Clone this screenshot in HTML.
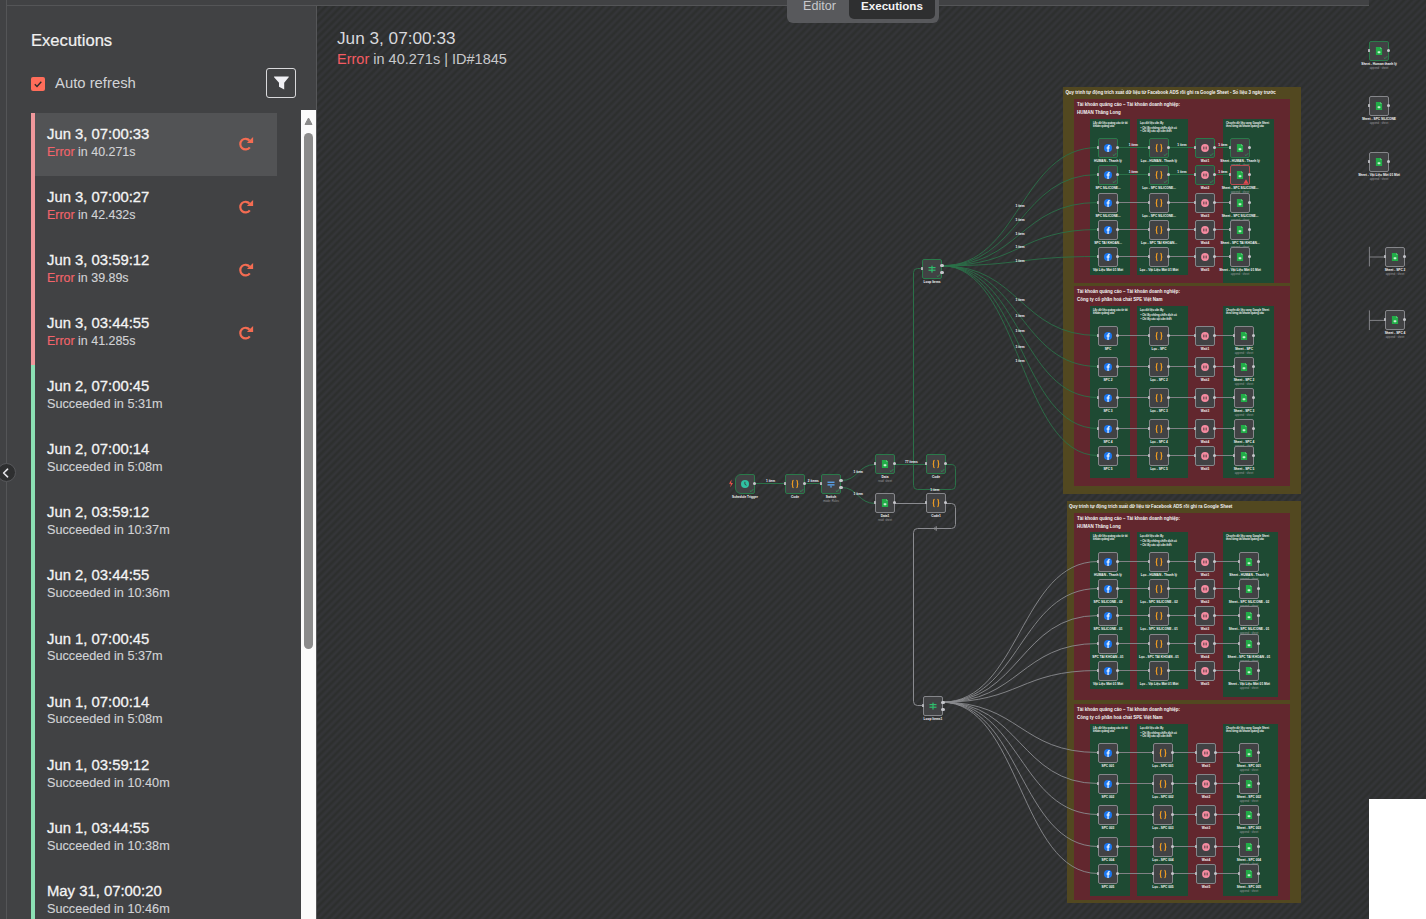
<!DOCTYPE html><html><head><meta charset='utf-8'><style>
*{box-sizing:border-box;margin:0;padding:0}
html,body{width:1426px;height:919px;overflow:hidden;background:#2d2f2e;font-family:"Liberation Sans",sans-serif}
.abs{position:absolute}
#canvas{position:absolute;left:317px;top:0;width:1109px;height:919px;
 background:repeating-linear-gradient(135deg,#2d2f2e 0px,#2d2f2e 0.8px,#343538 2.65px,#343538 3.45px,#2d2f2e 5.3px)}
#topbar{position:absolute;left:7px;top:0;width:1362px;height:6px;background:#414244;border-bottom:1px solid #545557}
#leftstrip{position:absolute;left:0;top:0;width:7px;height:919px;background:#414244;border-right:1px solid #545557}
#sidebar{position:absolute;left:7px;top:6px;width:310px;height:913px;background:#414244;border-right:1px solid #555658}
.t{position:absolute;white-space:nowrap;line-height:1}
.row{position:absolute;left:31px;width:246px;height:63px}
.bar{position:absolute;left:0;top:0;width:4px;height:63px}
.date{position:absolute;left:16px;top:13.8px;font-size:14.85px;font-weight:400;-webkit-text-stroke:0.28px #f4f4f4;color:#f4f4f4;white-space:nowrap;line-height:1}
.sub{position:absolute;left:16px;top:32.6px;font-size:12.45px;color:#d2d3d6;-webkit-text-stroke:0.12px currentColor;white-space:nowrap;line-height:1}
.err{color:#f2646b}
.node{position:absolute;width:20px;height:20px;border:1px solid #8a8b8e;border-radius:2px;background:#414244}
.node.g{border-color:#2f9a5a}
.node.r{border-color:#d9535b}
.lbl{position:absolute;white-space:nowrap;color:#e8e8e8;font-weight:700;transform-origin:50% 0}
</style></head><body>
<div id='canvas'></div>
<div id='leftstrip'></div>
<div id='sidebar'></div>
<div id='topbar'></div>
<div class='abs' style='left:1063px;top:87px;width:238px;height:406.5px;background:#524820'></div>
<div class='abs' style='left:1066.8px;top:501.2px;width:234.20000000000005px;height:402.09999999999997px;background:#524820'></div>
<div class='abs' style='left:1074.1px;top:99.4px;width:215.5px;height:183.6px;background:#62272e'></div>
<div class='abs' style='left:1074.1px;top:286.4px;width:215.5px;height:199.3px;background:#62272e'></div>
<div class='abs' style='left:1074.1px;top:513.2px;width:215.5px;height:187.0px;background:#62272e'></div>
<div class='abs' style='left:1074.1px;top:704.1px;width:215.5px;height:195.60000000000002px;background:#62272e'></div>
<div class='abs' style='left:1090.3px;top:118.8px;width:39.299999999999955px;height:155.89999999999998px;background:#1e4a33'></div>
<div class='abs' style='left:1137.3px;top:118.8px;width:50.700000000000045px;height:155.89999999999998px;background:#1e4a33'></div>
<div class='abs' style='left:1223px;top:118.8px;width:51px;height:163.8px;background:#1e4a33'></div>
<div class='abs' style='left:1090.3px;top:306px;width:39.299999999999955px;height:171.7px;background:#1e4a33'></div>
<div class='abs' style='left:1137.3px;top:306px;width:50.700000000000045px;height:171.7px;background:#1e4a33'></div>
<div class='abs' style='left:1223px;top:306px;width:51px;height:171.7px;background:#1e4a33'></div>
<div class='abs' style='left:1090.3px;top:532.2px;width:39.299999999999955px;height:156.5999999999999px;background:#1e4a33'></div>
<div class='abs' style='left:1137.3px;top:532.2px;width:50.700000000000045px;height:156.5999999999999px;background:#1e4a33'></div>
<div class='abs' style='left:1223px;top:532.2px;width:54.799999999999955px;height:164.39999999999998px;background:#1e4a33'></div>
<div class='abs' style='left:1090.3px;top:723.8px;width:39.299999999999955px;height:171.80000000000007px;background:#1e4a33'></div>
<div class='abs' style='left:1137.3px;top:723.8px;width:50.700000000000045px;height:171.80000000000007px;background:#1e4a33'></div>
<div class='abs' style='left:1223px;top:723.8px;width:54.799999999999955px;height:171.80000000000007px;background:#1e4a33'></div>
<div class='t' style='left:1065.4px;top:91.1px;font-size:4.44px;color:#f4f4f4;font-weight:700'>Quy trình tự động trích xuất dữ liệu từ Facebook ADS rồi ghi ra Google Sheet - Số liệu 3 ngày trước</div>
<div class='t' style='left:1069px;top:505.2px;font-size:4.44px;color:#f4f4f4;font-weight:700'>Quy trình tự động trích xuất dữ liệu từ Facebook ADS rồi ghi ra Google Sheet</div>
<div class='t' style='left:1076.8999999999999px;top:103.0px;font-size:4.5px;color:#f4f4f4;font-weight:700'>Tài khoản quảng cáo – Tài khoản doanh nghiệp:</div>
<div class='t' style='left:1076.8999999999999px;top:111.0px;font-size:4.5px;color:#f4f4f4;font-weight:700'>HUMAN Thăng Long</div>
<div class='t' style='left:1076.8999999999999px;top:290.0px;font-size:4.5px;color:#f4f4f4;font-weight:700'>Tài khoản quảng cáo – Tài khoản doanh nghiệp:</div>
<div class='t' style='left:1076.8999999999999px;top:298.0px;font-size:4.5px;color:#f4f4f4;font-weight:700'>Công ty cổ phần hoá chất SPE Việt Nam</div>
<div class='t' style='left:1076.8999999999999px;top:516.8000000000001px;font-size:4.5px;color:#f4f4f4;font-weight:700'>Tài khoản quảng cáo – Tài khoản doanh nghiệp:</div>
<div class='t' style='left:1076.8999999999999px;top:524.8000000000001px;font-size:4.5px;color:#f4f4f4;font-weight:700'>HUMAN Thăng Long</div>
<div class='t' style='left:1076.8999999999999px;top:707.7px;font-size:4.5px;color:#f4f4f4;font-weight:700'>Tài khoản quảng cáo – Tài khoản doanh nghiệp:</div>
<div class='t' style='left:1076.8999999999999px;top:715.7px;font-size:4.5px;color:#f4f4f4;font-weight:700'>Công ty cổ phần hoá chất SPE Việt Nam</div>
<div class='t' style='left:1093px;top:122.7px;font-size:2.6px;color:#f4f4f4;font-weight:700'>Lấy dữ liệu quảng cáo từ tài</div>
<div class='t' style='left:1093px;top:126.0px;font-size:2.6px;color:#f4f4f4;font-weight:700'>khoản quảng cáo</div>
<div class='t' style='left:1140px;top:122.7px;font-size:2.6px;color:#f4f4f4;font-weight:700'>Lọc dữ liệu cần lấy</div>
<div class='t' style='left:1140.5px;top:127.5px;font-size:2.6px;color:#f4f4f4;font-weight:700'>• Chỉ lấy những chiến dịch có</div>
<div class='t' style='left:1140.5px;top:131.4px;font-size:2.6px;color:#f4f4f4;font-weight:700'>• Chỉ lấy các cột cần thiết</div>
<div class='t' style='left:1226px;top:122.7px;font-size:2.6px;color:#f4f4f4;font-weight:700'>Chuyển dữ liệu sang Google Sheet</div>
<div class='t' style='left:1226px;top:126.0px;font-size:2.6px;color:#f4f4f4;font-weight:700'>theo từng tài khoản quảng cáo</div>
<div class='t' style='left:1093px;top:309.9px;font-size:2.6px;color:#f4f4f4;font-weight:700'>Lấy dữ liệu quảng cáo từ tài</div>
<div class='t' style='left:1093px;top:313.2px;font-size:2.6px;color:#f4f4f4;font-weight:700'>khoản quảng cáo</div>
<div class='t' style='left:1140px;top:309.9px;font-size:2.6px;color:#f4f4f4;font-weight:700'>Lọc dữ liệu cần lấy</div>
<div class='t' style='left:1140.5px;top:314.7px;font-size:2.6px;color:#f4f4f4;font-weight:700'>• Chỉ lấy những chiến dịch có</div>
<div class='t' style='left:1140.5px;top:318.6px;font-size:2.6px;color:#f4f4f4;font-weight:700'>• Chỉ lấy các cột cần thiết</div>
<div class='t' style='left:1226px;top:309.9px;font-size:2.6px;color:#f4f4f4;font-weight:700'>Chuyển dữ liệu sang Google Sheet</div>
<div class='t' style='left:1226px;top:313.2px;font-size:2.6px;color:#f4f4f4;font-weight:700'>theo từng tài khoản quảng cáo</div>
<div class='t' style='left:1093px;top:536.1px;font-size:2.6px;color:#f4f4f4;font-weight:700'>Lấy dữ liệu quảng cáo từ tài</div>
<div class='t' style='left:1093px;top:539.4000000000001px;font-size:2.6px;color:#f4f4f4;font-weight:700'>khoản quảng cáo</div>
<div class='t' style='left:1140px;top:536.1px;font-size:2.6px;color:#f4f4f4;font-weight:700'>Lọc dữ liệu cần lấy</div>
<div class='t' style='left:1140.5px;top:540.9000000000001px;font-size:2.6px;color:#f4f4f4;font-weight:700'>• Chỉ lấy những chiến dịch có</div>
<div class='t' style='left:1140.5px;top:544.8000000000001px;font-size:2.6px;color:#f4f4f4;font-weight:700'>• Chỉ lấy các cột cần thiết</div>
<div class='t' style='left:1226px;top:536.1px;font-size:2.6px;color:#f4f4f4;font-weight:700'>Chuyển dữ liệu sang Google Sheet</div>
<div class='t' style='left:1226px;top:539.4000000000001px;font-size:2.6px;color:#f4f4f4;font-weight:700'>theo từng tài khoản quảng cáo</div>
<div class='t' style='left:1093px;top:727.6999999999999px;font-size:2.6px;color:#f4f4f4;font-weight:700'>Lấy dữ liệu quảng cáo từ tài</div>
<div class='t' style='left:1093px;top:731.0px;font-size:2.6px;color:#f4f4f4;font-weight:700'>khoản quảng cáo</div>
<div class='t' style='left:1140px;top:727.6999999999999px;font-size:2.6px;color:#f4f4f4;font-weight:700'>Lọc dữ liệu cần lấy</div>
<div class='t' style='left:1140.5px;top:732.5px;font-size:2.6px;color:#f4f4f4;font-weight:700'>• Chỉ lấy những chiến dịch có</div>
<div class='t' style='left:1140.5px;top:736.4px;font-size:2.6px;color:#f4f4f4;font-weight:700'>• Chỉ lấy các cột cần thiết</div>
<div class='t' style='left:1226px;top:727.6999999999999px;font-size:2.6px;color:#f4f4f4;font-weight:700'>Chuyển dữ liệu sang Google Sheet</div>
<div class='t' style='left:1226px;top:731.0px;font-size:2.6px;color:#f4f4f4;font-weight:700'>theo từng tài khoản quảng cáo</div>
<svg class='abs' style='left:0;top:0' width='1426' height='919'><path d='M1118 147.5 L1149 147.5' fill='none' stroke='#2a7148' stroke-width='1'/><path d='M1169 147.5 L1195 147.5' fill='none' stroke='#2a7148' stroke-width='1'/><path d='M1215 147.5 L1230 147.5' fill='none' stroke='#2a7148' stroke-width='1'/><path d='M1118 174.5 L1149 174.5' fill='none' stroke='#2a7148' stroke-width='1'/><path d='M1169 174.5 L1195 174.5' fill='none' stroke='#2a7148' stroke-width='1'/><path d='M1215 174.5 L1230 174.5' fill='none' stroke='#2a7148' stroke-width='1'/><path d='M1118 202.5 L1149 202.5' fill='none' stroke='#808185' stroke-width='1'/><path d='M1169 202.5 L1195 202.5' fill='none' stroke='#808185' stroke-width='1'/><path d='M1215 202.5 L1230 202.5' fill='none' stroke='#808185' stroke-width='1'/><path d='M1118 229.5 L1149 229.5' fill='none' stroke='#808185' stroke-width='1'/><path d='M1169 229.5 L1195 229.5' fill='none' stroke='#808185' stroke-width='1'/><path d='M1215 229.5 L1230 229.5' fill='none' stroke='#808185' stroke-width='1'/><path d='M1118 256.5 L1149 256.5' fill='none' stroke='#808185' stroke-width='1'/><path d='M1169 256.5 L1195 256.5' fill='none' stroke='#808185' stroke-width='1'/><path d='M1215 256.5 L1230 256.5' fill='none' stroke='#808185' stroke-width='1'/><path d='M1118 335.5 L1149 335.5' fill='none' stroke='#808185' stroke-width='1'/><path d='M1169 335.5 L1195 335.5' fill='none' stroke='#808185' stroke-width='1'/><path d='M1215 335.5 L1234 335.5' fill='none' stroke='#808185' stroke-width='1'/><path d='M1118 366.5 L1149 366.5' fill='none' stroke='#808185' stroke-width='1'/><path d='M1169 366.5 L1195 366.5' fill='none' stroke='#808185' stroke-width='1'/><path d='M1215 366.5 L1234 366.5' fill='none' stroke='#808185' stroke-width='1'/><path d='M1118 397.5 L1149 397.5' fill='none' stroke='#808185' stroke-width='1'/><path d='M1169 397.5 L1195 397.5' fill='none' stroke='#808185' stroke-width='1'/><path d='M1215 397.5 L1234 397.5' fill='none' stroke='#808185' stroke-width='1'/><path d='M1118 428.5 L1149 428.5' fill='none' stroke='#808185' stroke-width='1'/><path d='M1169 428.5 L1195 428.5' fill='none' stroke='#808185' stroke-width='1'/><path d='M1215 428.5 L1234 428.5' fill='none' stroke='#808185' stroke-width='1'/><path d='M1118 455.5 L1149 455.5' fill='none' stroke='#808185' stroke-width='1'/><path d='M1169 455.5 L1195 455.5' fill='none' stroke='#808185' stroke-width='1'/><path d='M1215 455.5 L1234 455.5' fill='none' stroke='#808185' stroke-width='1'/><path d='M1118 561.5 L1149 561.5' fill='none' stroke='#808185' stroke-width='1'/><path d='M1169 561.5 L1195 561.5' fill='none' stroke='#808185' stroke-width='1'/><path d='M1215 561.5 L1239 561.5' fill='none' stroke='#808185' stroke-width='1'/><path d='M1118 588.5 L1149 588.5' fill='none' stroke='#808185' stroke-width='1'/><path d='M1169 588.5 L1195 588.5' fill='none' stroke='#808185' stroke-width='1'/><path d='M1215 588.5 L1239 588.5' fill='none' stroke='#808185' stroke-width='1'/><path d='M1118 615.5 L1149 615.5' fill='none' stroke='#808185' stroke-width='1'/><path d='M1169 615.5 L1195 615.5' fill='none' stroke='#808185' stroke-width='1'/><path d='M1215 615.5 L1239 615.5' fill='none' stroke='#808185' stroke-width='1'/><path d='M1118 643.5 L1149 643.5' fill='none' stroke='#808185' stroke-width='1'/><path d='M1169 643.5 L1195 643.5' fill='none' stroke='#808185' stroke-width='1'/><path d='M1215 643.5 L1239 643.5' fill='none' stroke='#808185' stroke-width='1'/><path d='M1118 670.5 L1149 670.5' fill='none' stroke='#808185' stroke-width='1'/><path d='M1169 670.5 L1195 670.5' fill='none' stroke='#808185' stroke-width='1'/><path d='M1215 670.5 L1239 670.5' fill='none' stroke='#808185' stroke-width='1'/><path d='M1118 752.5 L1153 752.5' fill='none' stroke='#808185' stroke-width='1'/><path d='M1173 752.5 L1196 752.5' fill='none' stroke='#808185' stroke-width='1'/><path d='M1216 752.5 L1239 752.5' fill='none' stroke='#808185' stroke-width='1'/><path d='M1118 783.5 L1153 783.5' fill='none' stroke='#808185' stroke-width='1'/><path d='M1173 783.5 L1196 783.5' fill='none' stroke='#808185' stroke-width='1'/><path d='M1216 783.5 L1239 783.5' fill='none' stroke='#808185' stroke-width='1'/><path d='M1118 814.5 L1153 814.5' fill='none' stroke='#808185' stroke-width='1'/><path d='M1173 814.5 L1196 814.5' fill='none' stroke='#808185' stroke-width='1'/><path d='M1216 814.5 L1239 814.5' fill='none' stroke='#808185' stroke-width='1'/><path d='M1118 846.5 L1153 846.5' fill='none' stroke='#808185' stroke-width='1'/><path d='M1173 846.5 L1196 846.5' fill='none' stroke='#808185' stroke-width='1'/><path d='M1216 846.5 L1239 846.5' fill='none' stroke='#808185' stroke-width='1'/><path d='M1118 873.5 L1153 873.5' fill='none' stroke='#808185' stroke-width='1'/><path d='M1173 873.5 L1196 873.5' fill='none' stroke='#808185' stroke-width='1'/><path d='M1216 873.5 L1239 873.5' fill='none' stroke='#808185' stroke-width='1'/><path d='M755 483.5 L785.4 483.5' fill='none' stroke='#2a7148' stroke-width='1'/><path d='M805.4 483.5 L820.8 483.5' fill='none' stroke='#2a7148' stroke-width='1'/><path d='M841 480.6 C858 480.6 858 464.5 875.2 464.5' fill='none' stroke='#2a7148' stroke-width='1'/><path d='M841 487.4 C858 487.4 858 503.5 875.2 503.5' fill='none' stroke='#2a7148' stroke-width='1'/><path d='M895 464.5 L926 464.5' fill='none' stroke='#2a7148' stroke-width='1'/><path d='M946 464.5 L951 464.5 Q955.5 464.5 955.5 468.5 L955.5 485.5 Q955.5 489.5 951.5 489.5 L917.5 489.5 Q913.5 489.5 913.5 485.5 L913.5 272.5 Q913.5 268.5 917.5 268.5 L922.2 268.5' fill='none' stroke='#2a7148' stroke-width='1'/><path d='M895 503.5 L926 503.5' fill='none' stroke='#8a8b8f' stroke-width='1'/><path d='M946 503.5 L951.5 503.5 Q955.5 503.5 955.5 507.5 L955.5 524.5 Q955.5 528.5 951.5 528.5 L917.5 528.5 Q913.5 528.5 913.5 532.5 L913.5 701.5 Q913.5 705.5 917.5 705.5 L922.6 705.5' fill='none' stroke='#8a8b8f' stroke-width='1'/><path d='M942 265.8 C1020.0 265.8 1020.0 147.5 1098 147.5' fill='none' stroke='#2a7148' stroke-width='0.9'/><path d='M942 265.8 C1020.0 265.8 1020.0 174.5 1098 174.5' fill='none' stroke='#2a7148' stroke-width='0.9'/><path d='M942 265.8 C1020.0 265.8 1020.0 202.5 1098 202.5' fill='none' stroke='#2a7148' stroke-width='0.9'/><path d='M942 265.8 C1020.0 265.8 1020.0 229.5 1098 229.5' fill='none' stroke='#2a7148' stroke-width='0.9'/><path d='M942 265.8 C1020.0 265.8 1020.0 256.5 1098 256.5' fill='none' stroke='#2a7148' stroke-width='0.9'/><path d='M942 265.8 C1020.0 265.8 1020.0 335.5 1098 335.5' fill='none' stroke='#2a7148' stroke-width='0.9'/><path d='M942 265.8 C1020.0 265.8 1020.0 366.5 1098 366.5' fill='none' stroke='#2a7148' stroke-width='0.9'/><path d='M942 265.8 C1020.0 265.8 1020.0 397.5 1098 397.5' fill='none' stroke='#2a7148' stroke-width='0.9'/><path d='M942 265.8 C1020.0 265.8 1020.0 428.5 1098 428.5' fill='none' stroke='#2a7148' stroke-width='0.9'/><path d='M942 265.8 C1020.0 265.8 1020.0 455.5 1098 455.5' fill='none' stroke='#2a7148' stroke-width='0.9'/><path d='M942 702.2 C1020.0 702.2 1020.0 561.5 1098 561.5' fill='none' stroke='#8a8b8f' stroke-width='0.9'/><path d='M942 702.2 C1020.0 702.2 1020.0 588.5 1098 588.5' fill='none' stroke='#8a8b8f' stroke-width='0.9'/><path d='M942 702.2 C1020.0 702.2 1020.0 615.5 1098 615.5' fill='none' stroke='#8a8b8f' stroke-width='0.9'/><path d='M942 702.2 C1020.0 702.2 1020.0 643.5 1098 643.5' fill='none' stroke='#8a8b8f' stroke-width='0.9'/><path d='M942 702.2 C1020.0 702.2 1020.0 670.5 1098 670.5' fill='none' stroke='#8a8b8f' stroke-width='0.9'/><path d='M942 702.2 C1020.0 702.2 1020.0 752.5 1098 752.5' fill='none' stroke='#8a8b8f' stroke-width='0.9'/><path d='M942 702.2 C1020.0 702.2 1020.0 783.5 1098 783.5' fill='none' stroke='#8a8b8f' stroke-width='0.9'/><path d='M942 702.2 C1020.0 702.2 1020.0 814.5 1098 814.5' fill='none' stroke='#8a8b8f' stroke-width='0.9'/><path d='M942 702.2 C1020.0 702.2 1020.0 846.5 1098 846.5' fill='none' stroke='#8a8b8f' stroke-width='0.9'/><path d='M942 702.2 C1020.0 702.2 1020.0 873.5 1098 873.5' fill='none' stroke='#8a8b8f' stroke-width='0.9'/><path d='M1369.4 246.8 L1369.4 266.4 M1369.4 257 L1385 257' fill='none' stroke='#8a8b8f' stroke-width='0.9'/><path d='M1369.4 310.4 L1369.4 330 M1369.4 320.4 L1385 320.4' fill='none' stroke='#8a8b8f' stroke-width='0.9'/><path d='M933.5 528.5 L936.5 526.5 L936.5 530.5 Z' fill='none' stroke='#8a8b8f' stroke-width='0.8'/></svg>
<div class='abs' style='left:1098px;top:138px;width:20px;height:20px;border:1px solid #2a7a4a;border-radius:2px;background:#414244'></div>
<svg class='abs' style='left:1103.0px;top:143.0px' width='10' height='10' viewBox='0 0 10 10'><circle cx='5' cy='5' r='4' fill='#1a77f2'/><path d='M5.6 9 V5.6 H6.6 L6.8 4.5 H5.6 V3.9 C5.6 3.5 5.8 3.3 6.2 3.3 H6.9 V2.3 H6 C5 2.3 4.5 2.9 4.5 3.8 V4.5 H3.5 V5.6 H4.5 V9 Z' fill='#fff'/></svg>
<svg class='abs' style='left:1112px;top:152px' width='5' height='5' viewBox='0 0 5 5'><path d='M0.8 2.6 L2 3.7 L4.2 1.2' fill='none' stroke='#2e9a58' stroke-width='0.8'/></svg>
<div class='abs' style='left:1097px;top:145.7px;width:2px;height:3.6px;background:#b4b5ba;border-radius:0.5px'></div>
<div class='abs' style='left:1116px;top:146.0px;width:3px;height:3px;background:#c6c7cc;border-radius:50%'></div>
<div class='t' style='left:1108.0px;top:160.4px;font-size:3.2px;color:#f6f6f6;font-weight:700;transform:translateX(-50%)'>HUMAN - Thanh lý</div>
<div class='abs' style='left:1149px;top:138px;width:20px;height:20px;border:1px solid #2a7a4a;border-radius:2px;background:#414244'></div>
<svg class='abs' style='left:1154.0px;top:143.0px' width='10' height='10' viewBox='0 0 10 10'><path d='M3.6 1.4 Q2.6 1.4 2.6 2.4 V4.2 Q2.6 5 1.6 5 Q2.6 5 2.6 5.8 V7.6 Q2.6 8.6 3.6 8.6' fill='none' stroke='#f29e22' stroke-width='1.1'/><path d='M6.4 1.4 Q7.4 1.4 7.4 2.4 V4.2 Q7.4 5 8.4 5 Q7.4 5 7.4 5.8 V7.6 Q7.4 8.6 6.4 8.6' fill='none' stroke='#f29e22' stroke-width='1.1'/></svg>
<svg class='abs' style='left:1163px;top:152px' width='5' height='5' viewBox='0 0 5 5'><path d='M0.8 2.6 L2 3.7 L4.2 1.2' fill='none' stroke='#2e9a58' stroke-width='0.8'/></svg>
<div class='abs' style='left:1148px;top:145.7px;width:2px;height:3.6px;background:#b4b5ba;border-radius:0.5px'></div>
<div class='abs' style='left:1167px;top:146.0px;width:3px;height:3px;background:#c6c7cc;border-radius:50%'></div>
<div class='t' style='left:1159.0px;top:160.4px;font-size:3.2px;color:#f6f6f6;font-weight:700;transform:translateX(-50%)'>Lọc - HUMAN - Thanh lý</div>
<div class='abs' style='left:1195px;top:138px;width:20px;height:20px;border:1px solid #2a7a4a;border-radius:2px;background:#414244'></div>
<svg class='abs' style='left:1200.0px;top:143.0px' width='10' height='10' viewBox='0 0 10 10'><circle cx='5' cy='5' r='3.9' fill='#f58aa0'/><path d='M3.85 3.6 V6.4 M6.15 3.6 V6.4' stroke='#2e2e30' stroke-width='0.85'/></svg>
<svg class='abs' style='left:1209px;top:152px' width='5' height='5' viewBox='0 0 5 5'><path d='M0.8 2.6 L2 3.7 L4.2 1.2' fill='none' stroke='#2e9a58' stroke-width='0.8'/></svg>
<div class='abs' style='left:1194px;top:145.7px;width:2px;height:3.6px;background:#b4b5ba;border-radius:0.5px'></div>
<div class='abs' style='left:1213px;top:146.0px;width:3px;height:3px;background:#c6c7cc;border-radius:50%'></div>
<div class='t' style='left:1205.0px;top:160.4px;font-size:3.2px;color:#f6f6f6;font-weight:700;transform:translateX(-50%)'>Wait1</div>
<div class='abs' style='left:1230px;top:138px;width:20px;height:20px;border:1px solid #2a7a4a;border-radius:2px;background:#414244'></div>
<svg class='abs' style='left:1235.0px;top:143.0px' width='10' height='10' viewBox='0 0 10 10'><path d='M1.9 0.9 H6.2 L8.1 2.8 V9 H1.9 Z' fill='#22ad48'/><path d='M6.2 0.9 V2.8 H8.1 Z' fill='#6fd08a'/><rect x='3.6' y='5.2' width='2.8' height='2' rx='0.6' fill='#c9efd2'/></svg>
<svg class='abs' style='left:1244px;top:152px' width='5' height='5' viewBox='0 0 5 5'><path d='M0.8 2.6 L2 3.7 L4.2 1.2' fill='none' stroke='#2e9a58' stroke-width='0.8'/></svg>
<div class='abs' style='left:1229px;top:145.7px;width:2px;height:3.6px;background:#b4b5ba;border-radius:0.5px'></div>
<div class='abs' style='left:1248px;top:146.0px;width:3px;height:3px;background:#c6c7cc;border-radius:50%'></div>
<div class='t' style='left:1240.0px;top:160.4px;font-size:3.2px;color:#f6f6f6;font-weight:700;transform:translateX(-50%)'>Sheet - HUMAN - Thanh lý</div>
<div class='t' style='left:1240.0px;top:164.4px;font-size:2.8px;color:#9a9a9e;transform:translateX(-50%)'>append : sheet</div>
<div class='abs' style='left:1098px;top:165px;width:20px;height:20px;border:1px solid #2a7a4a;border-radius:2px;background:#414244'></div>
<svg class='abs' style='left:1103.0px;top:170.0px' width='10' height='10' viewBox='0 0 10 10'><circle cx='5' cy='5' r='4' fill='#1a77f2'/><path d='M5.6 9 V5.6 H6.6 L6.8 4.5 H5.6 V3.9 C5.6 3.5 5.8 3.3 6.2 3.3 H6.9 V2.3 H6 C5 2.3 4.5 2.9 4.5 3.8 V4.5 H3.5 V5.6 H4.5 V9 Z' fill='#fff'/></svg>
<svg class='abs' style='left:1112px;top:179px' width='5' height='5' viewBox='0 0 5 5'><path d='M0.8 2.6 L2 3.7 L4.2 1.2' fill='none' stroke='#2e9a58' stroke-width='0.8'/></svg>
<div class='abs' style='left:1097px;top:172.7px;width:2px;height:3.6px;background:#b4b5ba;border-radius:0.5px'></div>
<div class='abs' style='left:1116px;top:173.0px;width:3px;height:3px;background:#c6c7cc;border-radius:50%'></div>
<div class='t' style='left:1108.0px;top:187.4px;font-size:3.2px;color:#f6f6f6;font-weight:700;transform:translateX(-50%)'>SPC SILICONE...</div>
<div class='abs' style='left:1149px;top:165px;width:20px;height:20px;border:1px solid #2a7a4a;border-radius:2px;background:#414244'></div>
<svg class='abs' style='left:1154.0px;top:170.0px' width='10' height='10' viewBox='0 0 10 10'><path d='M3.6 1.4 Q2.6 1.4 2.6 2.4 V4.2 Q2.6 5 1.6 5 Q2.6 5 2.6 5.8 V7.6 Q2.6 8.6 3.6 8.6' fill='none' stroke='#f29e22' stroke-width='1.1'/><path d='M6.4 1.4 Q7.4 1.4 7.4 2.4 V4.2 Q7.4 5 8.4 5 Q7.4 5 7.4 5.8 V7.6 Q7.4 8.6 6.4 8.6' fill='none' stroke='#f29e22' stroke-width='1.1'/></svg>
<svg class='abs' style='left:1163px;top:179px' width='5' height='5' viewBox='0 0 5 5'><path d='M0.8 2.6 L2 3.7 L4.2 1.2' fill='none' stroke='#2e9a58' stroke-width='0.8'/></svg>
<div class='abs' style='left:1148px;top:172.7px;width:2px;height:3.6px;background:#b4b5ba;border-radius:0.5px'></div>
<div class='abs' style='left:1167px;top:173.0px;width:3px;height:3px;background:#c6c7cc;border-radius:50%'></div>
<div class='t' style='left:1159.0px;top:187.4px;font-size:3.2px;color:#f6f6f6;font-weight:700;transform:translateX(-50%)'>Lọc - SPC SILICONE...</div>
<div class='abs' style='left:1195px;top:165px;width:20px;height:20px;border:1px solid #2a7a4a;border-radius:2px;background:#414244'></div>
<svg class='abs' style='left:1200.0px;top:170.0px' width='10' height='10' viewBox='0 0 10 10'><circle cx='5' cy='5' r='3.9' fill='#f58aa0'/><path d='M3.85 3.6 V6.4 M6.15 3.6 V6.4' stroke='#2e2e30' stroke-width='0.85'/></svg>
<svg class='abs' style='left:1209px;top:179px' width='5' height='5' viewBox='0 0 5 5'><path d='M0.8 2.6 L2 3.7 L4.2 1.2' fill='none' stroke='#2e9a58' stroke-width='0.8'/></svg>
<div class='abs' style='left:1194px;top:172.7px;width:2px;height:3.6px;background:#b4b5ba;border-radius:0.5px'></div>
<div class='abs' style='left:1213px;top:173.0px;width:3px;height:3px;background:#c6c7cc;border-radius:50%'></div>
<div class='t' style='left:1205.0px;top:187.4px;font-size:3.2px;color:#f6f6f6;font-weight:700;transform:translateX(-50%)'>Wait2</div>
<div class='abs' style='left:1230px;top:165px;width:20px;height:20px;border:1px solid #b84a50;border-radius:2px;background:#414244'></div>
<svg class='abs' style='left:1235.0px;top:170.0px' width='10' height='10' viewBox='0 0 10 10'><path d='M1.9 0.9 H6.2 L8.1 2.8 V9 H1.9 Z' fill='#22ad48'/><path d='M6.2 0.9 V2.8 H8.1 Z' fill='#6fd08a'/><rect x='3.6' y='5.2' width='2.8' height='2' rx='0.6' fill='#c9efd2'/></svg>
<svg class='abs' style='left:1243px;top:179px' width='6' height='5' viewBox='0 0 6 5'><path d='M3 0.3 L5.7 4.7 H0.3 Z' fill='#e5484f'/></svg>
<div class='abs' style='left:1229px;top:172.7px;width:2px;height:3.6px;background:#b4b5ba;border-radius:0.5px'></div>
<div class='abs' style='left:1248px;top:173.0px;width:3px;height:3px;background:#c6c7cc;border-radius:50%'></div>
<div class='t' style='left:1240.0px;top:187.4px;font-size:3.2px;color:#f6f6f6;font-weight:700;transform:translateX(-50%)'>Sheet - SPC SILICONE...</div>
<div class='t' style='left:1240.0px;top:191.4px;font-size:2.8px;color:#9a9a9e;transform:translateX(-50%)'>append : sheet</div>
<div class='abs' style='left:1098px;top:193px;width:20px;height:20px;border:1px solid #85868a;border-radius:2px;background:#414244'></div>
<svg class='abs' style='left:1103.0px;top:198.0px' width='10' height='10' viewBox='0 0 10 10'><circle cx='5' cy='5' r='4' fill='#1a77f2'/><path d='M5.6 9 V5.6 H6.6 L6.8 4.5 H5.6 V3.9 C5.6 3.5 5.8 3.3 6.2 3.3 H6.9 V2.3 H6 C5 2.3 4.5 2.9 4.5 3.8 V4.5 H3.5 V5.6 H4.5 V9 Z' fill='#fff'/></svg>
<div class='abs' style='left:1097px;top:200.7px;width:2px;height:3.6px;background:#b4b5ba;border-radius:0.5px'></div>
<div class='abs' style='left:1116px;top:201.0px;width:3px;height:3px;background:#c6c7cc;border-radius:50%'></div>
<div class='t' style='left:1108.0px;top:215.4px;font-size:3.2px;color:#f6f6f6;font-weight:700;transform:translateX(-50%)'>SPC SILICONE...</div>
<div class='abs' style='left:1149px;top:193px;width:20px;height:20px;border:1px solid #85868a;border-radius:2px;background:#414244'></div>
<svg class='abs' style='left:1154.0px;top:198.0px' width='10' height='10' viewBox='0 0 10 10'><path d='M3.6 1.4 Q2.6 1.4 2.6 2.4 V4.2 Q2.6 5 1.6 5 Q2.6 5 2.6 5.8 V7.6 Q2.6 8.6 3.6 8.6' fill='none' stroke='#f29e22' stroke-width='1.1'/><path d='M6.4 1.4 Q7.4 1.4 7.4 2.4 V4.2 Q7.4 5 8.4 5 Q7.4 5 7.4 5.8 V7.6 Q7.4 8.6 6.4 8.6' fill='none' stroke='#f29e22' stroke-width='1.1'/></svg>
<div class='abs' style='left:1148px;top:200.7px;width:2px;height:3.6px;background:#b4b5ba;border-radius:0.5px'></div>
<div class='abs' style='left:1167px;top:201.0px;width:3px;height:3px;background:#c6c7cc;border-radius:50%'></div>
<div class='t' style='left:1159.0px;top:215.4px;font-size:3.2px;color:#f6f6f6;font-weight:700;transform:translateX(-50%)'>Lọc - SPC SILICONE...</div>
<div class='abs' style='left:1195px;top:193px;width:20px;height:20px;border:1px solid #85868a;border-radius:2px;background:#414244'></div>
<svg class='abs' style='left:1200.0px;top:198.0px' width='10' height='10' viewBox='0 0 10 10'><circle cx='5' cy='5' r='3.9' fill='#f58aa0'/><path d='M3.85 3.6 V6.4 M6.15 3.6 V6.4' stroke='#2e2e30' stroke-width='0.85'/></svg>
<div class='abs' style='left:1194px;top:200.7px;width:2px;height:3.6px;background:#b4b5ba;border-radius:0.5px'></div>
<div class='abs' style='left:1213px;top:201.0px;width:3px;height:3px;background:#c6c7cc;border-radius:50%'></div>
<div class='t' style='left:1205.0px;top:215.4px;font-size:3.2px;color:#f6f6f6;font-weight:700;transform:translateX(-50%)'>Wait3</div>
<div class='abs' style='left:1230px;top:193px;width:20px;height:20px;border:1px solid #85868a;border-radius:2px;background:#414244'></div>
<svg class='abs' style='left:1235.0px;top:198.0px' width='10' height='10' viewBox='0 0 10 10'><path d='M1.9 0.9 H6.2 L8.1 2.8 V9 H1.9 Z' fill='#22ad48'/><path d='M6.2 0.9 V2.8 H8.1 Z' fill='#6fd08a'/><rect x='3.6' y='5.2' width='2.8' height='2' rx='0.6' fill='#c9efd2'/></svg>
<div class='abs' style='left:1229px;top:200.7px;width:2px;height:3.6px;background:#b4b5ba;border-radius:0.5px'></div>
<div class='abs' style='left:1248px;top:201.0px;width:3px;height:3px;background:#c6c7cc;border-radius:50%'></div>
<div class='t' style='left:1240.0px;top:215.4px;font-size:3.2px;color:#f6f6f6;font-weight:700;transform:translateX(-50%)'>Sheet - SPC SILICONE...</div>
<div class='t' style='left:1240.0px;top:219.4px;font-size:2.8px;color:#9a9a9e;transform:translateX(-50%)'>append : sheet</div>
<div class='abs' style='left:1098px;top:220px;width:20px;height:20px;border:1px solid #85868a;border-radius:2px;background:#414244'></div>
<svg class='abs' style='left:1103.0px;top:225.0px' width='10' height='10' viewBox='0 0 10 10'><circle cx='5' cy='5' r='4' fill='#1a77f2'/><path d='M5.6 9 V5.6 H6.6 L6.8 4.5 H5.6 V3.9 C5.6 3.5 5.8 3.3 6.2 3.3 H6.9 V2.3 H6 C5 2.3 4.5 2.9 4.5 3.8 V4.5 H3.5 V5.6 H4.5 V9 Z' fill='#fff'/></svg>
<div class='abs' style='left:1097px;top:227.7px;width:2px;height:3.6px;background:#b4b5ba;border-radius:0.5px'></div>
<div class='abs' style='left:1116px;top:228.0px;width:3px;height:3px;background:#c6c7cc;border-radius:50%'></div>
<div class='t' style='left:1108.0px;top:242.4px;font-size:3.2px;color:#f6f6f6;font-weight:700;transform:translateX(-50%)'>SPC TAI KHOAN...</div>
<div class='abs' style='left:1149px;top:220px;width:20px;height:20px;border:1px solid #85868a;border-radius:2px;background:#414244'></div>
<svg class='abs' style='left:1154.0px;top:225.0px' width='10' height='10' viewBox='0 0 10 10'><path d='M3.6 1.4 Q2.6 1.4 2.6 2.4 V4.2 Q2.6 5 1.6 5 Q2.6 5 2.6 5.8 V7.6 Q2.6 8.6 3.6 8.6' fill='none' stroke='#f29e22' stroke-width='1.1'/><path d='M6.4 1.4 Q7.4 1.4 7.4 2.4 V4.2 Q7.4 5 8.4 5 Q7.4 5 7.4 5.8 V7.6 Q7.4 8.6 6.4 8.6' fill='none' stroke='#f29e22' stroke-width='1.1'/></svg>
<div class='abs' style='left:1148px;top:227.7px;width:2px;height:3.6px;background:#b4b5ba;border-radius:0.5px'></div>
<div class='abs' style='left:1167px;top:228.0px;width:3px;height:3px;background:#c6c7cc;border-radius:50%'></div>
<div class='t' style='left:1159.0px;top:242.4px;font-size:3.2px;color:#f6f6f6;font-weight:700;transform:translateX(-50%)'>Lọc - SPC TAI KHOAN...</div>
<div class='abs' style='left:1195px;top:220px;width:20px;height:20px;border:1px solid #85868a;border-radius:2px;background:#414244'></div>
<svg class='abs' style='left:1200.0px;top:225.0px' width='10' height='10' viewBox='0 0 10 10'><circle cx='5' cy='5' r='3.9' fill='#f58aa0'/><path d='M3.85 3.6 V6.4 M6.15 3.6 V6.4' stroke='#2e2e30' stroke-width='0.85'/></svg>
<div class='abs' style='left:1194px;top:227.7px;width:2px;height:3.6px;background:#b4b5ba;border-radius:0.5px'></div>
<div class='abs' style='left:1213px;top:228.0px;width:3px;height:3px;background:#c6c7cc;border-radius:50%'></div>
<div class='t' style='left:1205.0px;top:242.4px;font-size:3.2px;color:#f6f6f6;font-weight:700;transform:translateX(-50%)'>Wait4</div>
<div class='abs' style='left:1230px;top:220px;width:20px;height:20px;border:1px solid #85868a;border-radius:2px;background:#414244'></div>
<svg class='abs' style='left:1235.0px;top:225.0px' width='10' height='10' viewBox='0 0 10 10'><path d='M1.9 0.9 H6.2 L8.1 2.8 V9 H1.9 Z' fill='#22ad48'/><path d='M6.2 0.9 V2.8 H8.1 Z' fill='#6fd08a'/><rect x='3.6' y='5.2' width='2.8' height='2' rx='0.6' fill='#c9efd2'/></svg>
<div class='abs' style='left:1229px;top:227.7px;width:2px;height:3.6px;background:#b4b5ba;border-radius:0.5px'></div>
<div class='abs' style='left:1248px;top:228.0px;width:3px;height:3px;background:#c6c7cc;border-radius:50%'></div>
<div class='t' style='left:1240.0px;top:242.4px;font-size:3.2px;color:#f6f6f6;font-weight:700;transform:translateX(-50%)'>Sheet - SPC TAI KHOAN...</div>
<div class='t' style='left:1240.0px;top:246.4px;font-size:2.8px;color:#9a9a9e;transform:translateX(-50%)'>append : sheet</div>
<div class='abs' style='left:1098px;top:247px;width:20px;height:20px;border:1px solid #85868a;border-radius:2px;background:#414244'></div>
<svg class='abs' style='left:1103.0px;top:252.0px' width='10' height='10' viewBox='0 0 10 10'><circle cx='5' cy='5' r='4' fill='#1a77f2'/><path d='M5.6 9 V5.6 H6.6 L6.8 4.5 H5.6 V3.9 C5.6 3.5 5.8 3.3 6.2 3.3 H6.9 V2.3 H6 C5 2.3 4.5 2.9 4.5 3.8 V4.5 H3.5 V5.6 H4.5 V9 Z' fill='#fff'/></svg>
<div class='abs' style='left:1097px;top:254.7px;width:2px;height:3.6px;background:#b4b5ba;border-radius:0.5px'></div>
<div class='abs' style='left:1116px;top:255.0px;width:3px;height:3px;background:#c6c7cc;border-radius:50%'></div>
<div class='t' style='left:1108.0px;top:269.4px;font-size:3.2px;color:#f6f6f6;font-weight:700;transform:translateX(-50%)'>Vật Liệu Mới 01 Mới</div>
<div class='abs' style='left:1149px;top:247px;width:20px;height:20px;border:1px solid #85868a;border-radius:2px;background:#414244'></div>
<svg class='abs' style='left:1154.0px;top:252.0px' width='10' height='10' viewBox='0 0 10 10'><path d='M3.6 1.4 Q2.6 1.4 2.6 2.4 V4.2 Q2.6 5 1.6 5 Q2.6 5 2.6 5.8 V7.6 Q2.6 8.6 3.6 8.6' fill='none' stroke='#f29e22' stroke-width='1.1'/><path d='M6.4 1.4 Q7.4 1.4 7.4 2.4 V4.2 Q7.4 5 8.4 5 Q7.4 5 7.4 5.8 V7.6 Q7.4 8.6 6.4 8.6' fill='none' stroke='#f29e22' stroke-width='1.1'/></svg>
<div class='abs' style='left:1148px;top:254.7px;width:2px;height:3.6px;background:#b4b5ba;border-radius:0.5px'></div>
<div class='abs' style='left:1167px;top:255.0px;width:3px;height:3px;background:#c6c7cc;border-radius:50%'></div>
<div class='t' style='left:1159.0px;top:269.4px;font-size:3.2px;color:#f6f6f6;font-weight:700;transform:translateX(-50%)'>Lọc - Vật Liệu Mới 01 Mới</div>
<div class='abs' style='left:1195px;top:247px;width:20px;height:20px;border:1px solid #85868a;border-radius:2px;background:#414244'></div>
<svg class='abs' style='left:1200.0px;top:252.0px' width='10' height='10' viewBox='0 0 10 10'><circle cx='5' cy='5' r='3.9' fill='#f58aa0'/><path d='M3.85 3.6 V6.4 M6.15 3.6 V6.4' stroke='#2e2e30' stroke-width='0.85'/></svg>
<div class='abs' style='left:1194px;top:254.7px;width:2px;height:3.6px;background:#b4b5ba;border-radius:0.5px'></div>
<div class='abs' style='left:1213px;top:255.0px;width:3px;height:3px;background:#c6c7cc;border-radius:50%'></div>
<div class='t' style='left:1205.0px;top:269.4px;font-size:3.2px;color:#f6f6f6;font-weight:700;transform:translateX(-50%)'>Wait5</div>
<div class='abs' style='left:1230px;top:247px;width:20px;height:20px;border:1px solid #85868a;border-radius:2px;background:#414244'></div>
<svg class='abs' style='left:1235.0px;top:252.0px' width='10' height='10' viewBox='0 0 10 10'><path d='M1.9 0.9 H6.2 L8.1 2.8 V9 H1.9 Z' fill='#22ad48'/><path d='M6.2 0.9 V2.8 H8.1 Z' fill='#6fd08a'/><rect x='3.6' y='5.2' width='2.8' height='2' rx='0.6' fill='#c9efd2'/></svg>
<div class='abs' style='left:1229px;top:254.7px;width:2px;height:3.6px;background:#b4b5ba;border-radius:0.5px'></div>
<div class='abs' style='left:1248px;top:255.0px;width:3px;height:3px;background:#c6c7cc;border-radius:50%'></div>
<div class='t' style='left:1240.0px;top:269.4px;font-size:3.2px;color:#f6f6f6;font-weight:700;transform:translateX(-50%)'>Sheet - Vật Liệu Mới 01 Mới</div>
<div class='t' style='left:1240.0px;top:273.4px;font-size:2.8px;color:#9a9a9e;transform:translateX(-50%)'>append : sheet</div>
<div class='abs' style='left:1098px;top:326px;width:20px;height:20px;border:1px solid #85868a;border-radius:2px;background:#414244'></div>
<svg class='abs' style='left:1103.0px;top:331.0px' width='10' height='10' viewBox='0 0 10 10'><circle cx='5' cy='5' r='4' fill='#1a77f2'/><path d='M5.6 9 V5.6 H6.6 L6.8 4.5 H5.6 V3.9 C5.6 3.5 5.8 3.3 6.2 3.3 H6.9 V2.3 H6 C5 2.3 4.5 2.9 4.5 3.8 V4.5 H3.5 V5.6 H4.5 V9 Z' fill='#fff'/></svg>
<div class='abs' style='left:1097px;top:333.7px;width:2px;height:3.6px;background:#b4b5ba;border-radius:0.5px'></div>
<div class='abs' style='left:1116px;top:334.0px;width:3px;height:3px;background:#c6c7cc;border-radius:50%'></div>
<div class='t' style='left:1108.0px;top:348.4px;font-size:3.2px;color:#f6f6f6;font-weight:700;transform:translateX(-50%)'>SPC</div>
<div class='abs' style='left:1149px;top:326px;width:20px;height:20px;border:1px solid #85868a;border-radius:2px;background:#414244'></div>
<svg class='abs' style='left:1154.0px;top:331.0px' width='10' height='10' viewBox='0 0 10 10'><path d='M3.6 1.4 Q2.6 1.4 2.6 2.4 V4.2 Q2.6 5 1.6 5 Q2.6 5 2.6 5.8 V7.6 Q2.6 8.6 3.6 8.6' fill='none' stroke='#f29e22' stroke-width='1.1'/><path d='M6.4 1.4 Q7.4 1.4 7.4 2.4 V4.2 Q7.4 5 8.4 5 Q7.4 5 7.4 5.8 V7.6 Q7.4 8.6 6.4 8.6' fill='none' stroke='#f29e22' stroke-width='1.1'/></svg>
<div class='abs' style='left:1148px;top:333.7px;width:2px;height:3.6px;background:#b4b5ba;border-radius:0.5px'></div>
<div class='abs' style='left:1167px;top:334.0px;width:3px;height:3px;background:#c6c7cc;border-radius:50%'></div>
<div class='t' style='left:1159.0px;top:348.4px;font-size:3.2px;color:#f6f6f6;font-weight:700;transform:translateX(-50%)'>Lọc - SPC</div>
<div class='abs' style='left:1195px;top:326px;width:20px;height:20px;border:1px solid #85868a;border-radius:2px;background:#414244'></div>
<svg class='abs' style='left:1200.0px;top:331.0px' width='10' height='10' viewBox='0 0 10 10'><circle cx='5' cy='5' r='3.9' fill='#f58aa0'/><path d='M3.85 3.6 V6.4 M6.15 3.6 V6.4' stroke='#2e2e30' stroke-width='0.85'/></svg>
<div class='abs' style='left:1194px;top:333.7px;width:2px;height:3.6px;background:#b4b5ba;border-radius:0.5px'></div>
<div class='abs' style='left:1213px;top:334.0px;width:3px;height:3px;background:#c6c7cc;border-radius:50%'></div>
<div class='t' style='left:1205.0px;top:348.4px;font-size:3.2px;color:#f6f6f6;font-weight:700;transform:translateX(-50%)'>Wait1</div>
<div class='abs' style='left:1234px;top:326px;width:20px;height:20px;border:1px solid #85868a;border-radius:2px;background:#414244'></div>
<svg class='abs' style='left:1239.0px;top:331.0px' width='10' height='10' viewBox='0 0 10 10'><path d='M1.9 0.9 H6.2 L8.1 2.8 V9 H1.9 Z' fill='#22ad48'/><path d='M6.2 0.9 V2.8 H8.1 Z' fill='#6fd08a'/><rect x='3.6' y='5.2' width='2.8' height='2' rx='0.6' fill='#c9efd2'/></svg>
<div class='abs' style='left:1233px;top:333.7px;width:2px;height:3.6px;background:#b4b5ba;border-radius:0.5px'></div>
<div class='abs' style='left:1252px;top:334.0px;width:3px;height:3px;background:#c6c7cc;border-radius:50%'></div>
<div class='t' style='left:1244.0px;top:348.4px;font-size:3.2px;color:#f6f6f6;font-weight:700;transform:translateX(-50%)'>Sheet - SPC</div>
<div class='t' style='left:1244.0px;top:352.4px;font-size:2.8px;color:#9a9a9e;transform:translateX(-50%)'>append : sheet</div>
<div class='abs' style='left:1098px;top:357px;width:20px;height:20px;border:1px solid #85868a;border-radius:2px;background:#414244'></div>
<svg class='abs' style='left:1103.0px;top:362.0px' width='10' height='10' viewBox='0 0 10 10'><circle cx='5' cy='5' r='4' fill='#1a77f2'/><path d='M5.6 9 V5.6 H6.6 L6.8 4.5 H5.6 V3.9 C5.6 3.5 5.8 3.3 6.2 3.3 H6.9 V2.3 H6 C5 2.3 4.5 2.9 4.5 3.8 V4.5 H3.5 V5.6 H4.5 V9 Z' fill='#fff'/></svg>
<div class='abs' style='left:1097px;top:364.7px;width:2px;height:3.6px;background:#b4b5ba;border-radius:0.5px'></div>
<div class='abs' style='left:1116px;top:365.0px;width:3px;height:3px;background:#c6c7cc;border-radius:50%'></div>
<div class='t' style='left:1108.0px;top:379.4px;font-size:3.2px;color:#f6f6f6;font-weight:700;transform:translateX(-50%)'>SPC 2</div>
<div class='abs' style='left:1149px;top:357px;width:20px;height:20px;border:1px solid #85868a;border-radius:2px;background:#414244'></div>
<svg class='abs' style='left:1154.0px;top:362.0px' width='10' height='10' viewBox='0 0 10 10'><path d='M3.6 1.4 Q2.6 1.4 2.6 2.4 V4.2 Q2.6 5 1.6 5 Q2.6 5 2.6 5.8 V7.6 Q2.6 8.6 3.6 8.6' fill='none' stroke='#f29e22' stroke-width='1.1'/><path d='M6.4 1.4 Q7.4 1.4 7.4 2.4 V4.2 Q7.4 5 8.4 5 Q7.4 5 7.4 5.8 V7.6 Q7.4 8.6 6.4 8.6' fill='none' stroke='#f29e22' stroke-width='1.1'/></svg>
<div class='abs' style='left:1148px;top:364.7px;width:2px;height:3.6px;background:#b4b5ba;border-radius:0.5px'></div>
<div class='abs' style='left:1167px;top:365.0px;width:3px;height:3px;background:#c6c7cc;border-radius:50%'></div>
<div class='t' style='left:1159.0px;top:379.4px;font-size:3.2px;color:#f6f6f6;font-weight:700;transform:translateX(-50%)'>Lọc - SPC 2</div>
<div class='abs' style='left:1195px;top:357px;width:20px;height:20px;border:1px solid #85868a;border-radius:2px;background:#414244'></div>
<svg class='abs' style='left:1200.0px;top:362.0px' width='10' height='10' viewBox='0 0 10 10'><circle cx='5' cy='5' r='3.9' fill='#f58aa0'/><path d='M3.85 3.6 V6.4 M6.15 3.6 V6.4' stroke='#2e2e30' stroke-width='0.85'/></svg>
<div class='abs' style='left:1194px;top:364.7px;width:2px;height:3.6px;background:#b4b5ba;border-radius:0.5px'></div>
<div class='abs' style='left:1213px;top:365.0px;width:3px;height:3px;background:#c6c7cc;border-radius:50%'></div>
<div class='t' style='left:1205.0px;top:379.4px;font-size:3.2px;color:#f6f6f6;font-weight:700;transform:translateX(-50%)'>Wait2</div>
<div class='abs' style='left:1234px;top:357px;width:20px;height:20px;border:1px solid #85868a;border-radius:2px;background:#414244'></div>
<svg class='abs' style='left:1239.0px;top:362.0px' width='10' height='10' viewBox='0 0 10 10'><path d='M1.9 0.9 H6.2 L8.1 2.8 V9 H1.9 Z' fill='#22ad48'/><path d='M6.2 0.9 V2.8 H8.1 Z' fill='#6fd08a'/><rect x='3.6' y='5.2' width='2.8' height='2' rx='0.6' fill='#c9efd2'/></svg>
<div class='abs' style='left:1233px;top:364.7px;width:2px;height:3.6px;background:#b4b5ba;border-radius:0.5px'></div>
<div class='abs' style='left:1252px;top:365.0px;width:3px;height:3px;background:#c6c7cc;border-radius:50%'></div>
<div class='t' style='left:1244.0px;top:379.4px;font-size:3.2px;color:#f6f6f6;font-weight:700;transform:translateX(-50%)'>Sheet - SPC 2</div>
<div class='t' style='left:1244.0px;top:383.4px;font-size:2.8px;color:#9a9a9e;transform:translateX(-50%)'>append : sheet</div>
<div class='abs' style='left:1098px;top:388px;width:20px;height:20px;border:1px solid #85868a;border-radius:2px;background:#414244'></div>
<svg class='abs' style='left:1103.0px;top:393.0px' width='10' height='10' viewBox='0 0 10 10'><circle cx='5' cy='5' r='4' fill='#1a77f2'/><path d='M5.6 9 V5.6 H6.6 L6.8 4.5 H5.6 V3.9 C5.6 3.5 5.8 3.3 6.2 3.3 H6.9 V2.3 H6 C5 2.3 4.5 2.9 4.5 3.8 V4.5 H3.5 V5.6 H4.5 V9 Z' fill='#fff'/></svg>
<div class='abs' style='left:1097px;top:395.7px;width:2px;height:3.6px;background:#b4b5ba;border-radius:0.5px'></div>
<div class='abs' style='left:1116px;top:396.0px;width:3px;height:3px;background:#c6c7cc;border-radius:50%'></div>
<div class='t' style='left:1108.0px;top:410.4px;font-size:3.2px;color:#f6f6f6;font-weight:700;transform:translateX(-50%)'>SPC 3</div>
<div class='abs' style='left:1149px;top:388px;width:20px;height:20px;border:1px solid #85868a;border-radius:2px;background:#414244'></div>
<svg class='abs' style='left:1154.0px;top:393.0px' width='10' height='10' viewBox='0 0 10 10'><path d='M3.6 1.4 Q2.6 1.4 2.6 2.4 V4.2 Q2.6 5 1.6 5 Q2.6 5 2.6 5.8 V7.6 Q2.6 8.6 3.6 8.6' fill='none' stroke='#f29e22' stroke-width='1.1'/><path d='M6.4 1.4 Q7.4 1.4 7.4 2.4 V4.2 Q7.4 5 8.4 5 Q7.4 5 7.4 5.8 V7.6 Q7.4 8.6 6.4 8.6' fill='none' stroke='#f29e22' stroke-width='1.1'/></svg>
<div class='abs' style='left:1148px;top:395.7px;width:2px;height:3.6px;background:#b4b5ba;border-radius:0.5px'></div>
<div class='abs' style='left:1167px;top:396.0px;width:3px;height:3px;background:#c6c7cc;border-radius:50%'></div>
<div class='t' style='left:1159.0px;top:410.4px;font-size:3.2px;color:#f6f6f6;font-weight:700;transform:translateX(-50%)'>Lọc - SPC 3</div>
<div class='abs' style='left:1195px;top:388px;width:20px;height:20px;border:1px solid #85868a;border-radius:2px;background:#414244'></div>
<svg class='abs' style='left:1200.0px;top:393.0px' width='10' height='10' viewBox='0 0 10 10'><circle cx='5' cy='5' r='3.9' fill='#f58aa0'/><path d='M3.85 3.6 V6.4 M6.15 3.6 V6.4' stroke='#2e2e30' stroke-width='0.85'/></svg>
<div class='abs' style='left:1194px;top:395.7px;width:2px;height:3.6px;background:#b4b5ba;border-radius:0.5px'></div>
<div class='abs' style='left:1213px;top:396.0px;width:3px;height:3px;background:#c6c7cc;border-radius:50%'></div>
<div class='t' style='left:1205.0px;top:410.4px;font-size:3.2px;color:#f6f6f6;font-weight:700;transform:translateX(-50%)'>Wait3</div>
<div class='abs' style='left:1234px;top:388px;width:20px;height:20px;border:1px solid #85868a;border-radius:2px;background:#414244'></div>
<svg class='abs' style='left:1239.0px;top:393.0px' width='10' height='10' viewBox='0 0 10 10'><path d='M1.9 0.9 H6.2 L8.1 2.8 V9 H1.9 Z' fill='#22ad48'/><path d='M6.2 0.9 V2.8 H8.1 Z' fill='#6fd08a'/><rect x='3.6' y='5.2' width='2.8' height='2' rx='0.6' fill='#c9efd2'/></svg>
<div class='abs' style='left:1233px;top:395.7px;width:2px;height:3.6px;background:#b4b5ba;border-radius:0.5px'></div>
<div class='abs' style='left:1252px;top:396.0px;width:3px;height:3px;background:#c6c7cc;border-radius:50%'></div>
<div class='t' style='left:1244.0px;top:410.4px;font-size:3.2px;color:#f6f6f6;font-weight:700;transform:translateX(-50%)'>Sheet - SPC 3</div>
<div class='t' style='left:1244.0px;top:414.4px;font-size:2.8px;color:#9a9a9e;transform:translateX(-50%)'>append : sheet</div>
<div class='abs' style='left:1098px;top:419px;width:20px;height:20px;border:1px solid #85868a;border-radius:2px;background:#414244'></div>
<svg class='abs' style='left:1103.0px;top:424.0px' width='10' height='10' viewBox='0 0 10 10'><circle cx='5' cy='5' r='4' fill='#1a77f2'/><path d='M5.6 9 V5.6 H6.6 L6.8 4.5 H5.6 V3.9 C5.6 3.5 5.8 3.3 6.2 3.3 H6.9 V2.3 H6 C5 2.3 4.5 2.9 4.5 3.8 V4.5 H3.5 V5.6 H4.5 V9 Z' fill='#fff'/></svg>
<div class='abs' style='left:1097px;top:426.7px;width:2px;height:3.6px;background:#b4b5ba;border-radius:0.5px'></div>
<div class='abs' style='left:1116px;top:427.0px;width:3px;height:3px;background:#c6c7cc;border-radius:50%'></div>
<div class='t' style='left:1108.0px;top:441.4px;font-size:3.2px;color:#f6f6f6;font-weight:700;transform:translateX(-50%)'>SPC 4</div>
<div class='abs' style='left:1149px;top:419px;width:20px;height:20px;border:1px solid #85868a;border-radius:2px;background:#414244'></div>
<svg class='abs' style='left:1154.0px;top:424.0px' width='10' height='10' viewBox='0 0 10 10'><path d='M3.6 1.4 Q2.6 1.4 2.6 2.4 V4.2 Q2.6 5 1.6 5 Q2.6 5 2.6 5.8 V7.6 Q2.6 8.6 3.6 8.6' fill='none' stroke='#f29e22' stroke-width='1.1'/><path d='M6.4 1.4 Q7.4 1.4 7.4 2.4 V4.2 Q7.4 5 8.4 5 Q7.4 5 7.4 5.8 V7.6 Q7.4 8.6 6.4 8.6' fill='none' stroke='#f29e22' stroke-width='1.1'/></svg>
<div class='abs' style='left:1148px;top:426.7px;width:2px;height:3.6px;background:#b4b5ba;border-radius:0.5px'></div>
<div class='abs' style='left:1167px;top:427.0px;width:3px;height:3px;background:#c6c7cc;border-radius:50%'></div>
<div class='t' style='left:1159.0px;top:441.4px;font-size:3.2px;color:#f6f6f6;font-weight:700;transform:translateX(-50%)'>Lọc - SPC 4</div>
<div class='abs' style='left:1195px;top:419px;width:20px;height:20px;border:1px solid #85868a;border-radius:2px;background:#414244'></div>
<svg class='abs' style='left:1200.0px;top:424.0px' width='10' height='10' viewBox='0 0 10 10'><circle cx='5' cy='5' r='3.9' fill='#f58aa0'/><path d='M3.85 3.6 V6.4 M6.15 3.6 V6.4' stroke='#2e2e30' stroke-width='0.85'/></svg>
<div class='abs' style='left:1194px;top:426.7px;width:2px;height:3.6px;background:#b4b5ba;border-radius:0.5px'></div>
<div class='abs' style='left:1213px;top:427.0px;width:3px;height:3px;background:#c6c7cc;border-radius:50%'></div>
<div class='t' style='left:1205.0px;top:441.4px;font-size:3.2px;color:#f6f6f6;font-weight:700;transform:translateX(-50%)'>Wait4</div>
<div class='abs' style='left:1234px;top:419px;width:20px;height:20px;border:1px solid #85868a;border-radius:2px;background:#414244'></div>
<svg class='abs' style='left:1239.0px;top:424.0px' width='10' height='10' viewBox='0 0 10 10'><path d='M1.9 0.9 H6.2 L8.1 2.8 V9 H1.9 Z' fill='#22ad48'/><path d='M6.2 0.9 V2.8 H8.1 Z' fill='#6fd08a'/><rect x='3.6' y='5.2' width='2.8' height='2' rx='0.6' fill='#c9efd2'/></svg>
<div class='abs' style='left:1233px;top:426.7px;width:2px;height:3.6px;background:#b4b5ba;border-radius:0.5px'></div>
<div class='abs' style='left:1252px;top:427.0px;width:3px;height:3px;background:#c6c7cc;border-radius:50%'></div>
<div class='t' style='left:1244.0px;top:441.4px;font-size:3.2px;color:#f6f6f6;font-weight:700;transform:translateX(-50%)'>Sheet - SPC 4</div>
<div class='t' style='left:1244.0px;top:445.4px;font-size:2.8px;color:#9a9a9e;transform:translateX(-50%)'>append : sheet</div>
<div class='abs' style='left:1098px;top:446px;width:20px;height:20px;border:1px solid #85868a;border-radius:2px;background:#414244'></div>
<svg class='abs' style='left:1103.0px;top:451.0px' width='10' height='10' viewBox='0 0 10 10'><circle cx='5' cy='5' r='4' fill='#1a77f2'/><path d='M5.6 9 V5.6 H6.6 L6.8 4.5 H5.6 V3.9 C5.6 3.5 5.8 3.3 6.2 3.3 H6.9 V2.3 H6 C5 2.3 4.5 2.9 4.5 3.8 V4.5 H3.5 V5.6 H4.5 V9 Z' fill='#fff'/></svg>
<div class='abs' style='left:1097px;top:453.7px;width:2px;height:3.6px;background:#b4b5ba;border-radius:0.5px'></div>
<div class='abs' style='left:1116px;top:454.0px;width:3px;height:3px;background:#c6c7cc;border-radius:50%'></div>
<div class='t' style='left:1108.0px;top:468.4px;font-size:3.2px;color:#f6f6f6;font-weight:700;transform:translateX(-50%)'>SPC 5</div>
<div class='abs' style='left:1149px;top:446px;width:20px;height:20px;border:1px solid #85868a;border-radius:2px;background:#414244'></div>
<svg class='abs' style='left:1154.0px;top:451.0px' width='10' height='10' viewBox='0 0 10 10'><path d='M3.6 1.4 Q2.6 1.4 2.6 2.4 V4.2 Q2.6 5 1.6 5 Q2.6 5 2.6 5.8 V7.6 Q2.6 8.6 3.6 8.6' fill='none' stroke='#f29e22' stroke-width='1.1'/><path d='M6.4 1.4 Q7.4 1.4 7.4 2.4 V4.2 Q7.4 5 8.4 5 Q7.4 5 7.4 5.8 V7.6 Q7.4 8.6 6.4 8.6' fill='none' stroke='#f29e22' stroke-width='1.1'/></svg>
<div class='abs' style='left:1148px;top:453.7px;width:2px;height:3.6px;background:#b4b5ba;border-radius:0.5px'></div>
<div class='abs' style='left:1167px;top:454.0px;width:3px;height:3px;background:#c6c7cc;border-radius:50%'></div>
<div class='t' style='left:1159.0px;top:468.4px;font-size:3.2px;color:#f6f6f6;font-weight:700;transform:translateX(-50%)'>Lọc - SPC 5</div>
<div class='abs' style='left:1195px;top:446px;width:20px;height:20px;border:1px solid #85868a;border-radius:2px;background:#414244'></div>
<svg class='abs' style='left:1200.0px;top:451.0px' width='10' height='10' viewBox='0 0 10 10'><circle cx='5' cy='5' r='3.9' fill='#f58aa0'/><path d='M3.85 3.6 V6.4 M6.15 3.6 V6.4' stroke='#2e2e30' stroke-width='0.85'/></svg>
<div class='abs' style='left:1194px;top:453.7px;width:2px;height:3.6px;background:#b4b5ba;border-radius:0.5px'></div>
<div class='abs' style='left:1213px;top:454.0px;width:3px;height:3px;background:#c6c7cc;border-radius:50%'></div>
<div class='t' style='left:1205.0px;top:468.4px;font-size:3.2px;color:#f6f6f6;font-weight:700;transform:translateX(-50%)'>Wait5</div>
<div class='abs' style='left:1234px;top:446px;width:20px;height:20px;border:1px solid #85868a;border-radius:2px;background:#414244'></div>
<svg class='abs' style='left:1239.0px;top:451.0px' width='10' height='10' viewBox='0 0 10 10'><path d='M1.9 0.9 H6.2 L8.1 2.8 V9 H1.9 Z' fill='#22ad48'/><path d='M6.2 0.9 V2.8 H8.1 Z' fill='#6fd08a'/><rect x='3.6' y='5.2' width='2.8' height='2' rx='0.6' fill='#c9efd2'/></svg>
<div class='abs' style='left:1233px;top:453.7px;width:2px;height:3.6px;background:#b4b5ba;border-radius:0.5px'></div>
<div class='abs' style='left:1252px;top:454.0px;width:3px;height:3px;background:#c6c7cc;border-radius:50%'></div>
<div class='t' style='left:1244.0px;top:468.4px;font-size:3.2px;color:#f6f6f6;font-weight:700;transform:translateX(-50%)'>Sheet - SPC 5</div>
<div class='t' style='left:1244.0px;top:472.4px;font-size:2.8px;color:#9a9a9e;transform:translateX(-50%)'>append : sheet</div>
<div class='abs' style='left:1098px;top:552px;width:20px;height:20px;border:1px solid #85868a;border-radius:2px;background:#414244'></div>
<svg class='abs' style='left:1103.0px;top:557.0px' width='10' height='10' viewBox='0 0 10 10'><circle cx='5' cy='5' r='4' fill='#1a77f2'/><path d='M5.6 9 V5.6 H6.6 L6.8 4.5 H5.6 V3.9 C5.6 3.5 5.8 3.3 6.2 3.3 H6.9 V2.3 H6 C5 2.3 4.5 2.9 4.5 3.8 V4.5 H3.5 V5.6 H4.5 V9 Z' fill='#fff'/></svg>
<div class='abs' style='left:1097px;top:559.7px;width:2px;height:3.6px;background:#b4b5ba;border-radius:0.5px'></div>
<div class='abs' style='left:1116px;top:560.0px;width:3px;height:3px;background:#c6c7cc;border-radius:50%'></div>
<div class='t' style='left:1108.0px;top:574.4px;font-size:3.2px;color:#f6f6f6;font-weight:700;transform:translateX(-50%)'>HUMAN - Thanh lý</div>
<div class='abs' style='left:1149px;top:552px;width:20px;height:20px;border:1px solid #85868a;border-radius:2px;background:#414244'></div>
<svg class='abs' style='left:1154.0px;top:557.0px' width='10' height='10' viewBox='0 0 10 10'><path d='M3.6 1.4 Q2.6 1.4 2.6 2.4 V4.2 Q2.6 5 1.6 5 Q2.6 5 2.6 5.8 V7.6 Q2.6 8.6 3.6 8.6' fill='none' stroke='#f29e22' stroke-width='1.1'/><path d='M6.4 1.4 Q7.4 1.4 7.4 2.4 V4.2 Q7.4 5 8.4 5 Q7.4 5 7.4 5.8 V7.6 Q7.4 8.6 6.4 8.6' fill='none' stroke='#f29e22' stroke-width='1.1'/></svg>
<div class='abs' style='left:1148px;top:559.7px;width:2px;height:3.6px;background:#b4b5ba;border-radius:0.5px'></div>
<div class='abs' style='left:1167px;top:560.0px;width:3px;height:3px;background:#c6c7cc;border-radius:50%'></div>
<div class='t' style='left:1159.0px;top:574.4px;font-size:3.2px;color:#f6f6f6;font-weight:700;transform:translateX(-50%)'>Lọc - HUMAN - Thanh lý</div>
<div class='abs' style='left:1195px;top:552px;width:20px;height:20px;border:1px solid #85868a;border-radius:2px;background:#414244'></div>
<svg class='abs' style='left:1200.0px;top:557.0px' width='10' height='10' viewBox='0 0 10 10'><circle cx='5' cy='5' r='3.9' fill='#f58aa0'/><path d='M3.85 3.6 V6.4 M6.15 3.6 V6.4' stroke='#2e2e30' stroke-width='0.85'/></svg>
<div class='abs' style='left:1194px;top:559.7px;width:2px;height:3.6px;background:#b4b5ba;border-radius:0.5px'></div>
<div class='abs' style='left:1213px;top:560.0px;width:3px;height:3px;background:#c6c7cc;border-radius:50%'></div>
<div class='t' style='left:1205.0px;top:574.4px;font-size:3.2px;color:#f6f6f6;font-weight:700;transform:translateX(-50%)'>Wait1</div>
<div class='abs' style='left:1239px;top:552px;width:20px;height:20px;border:1px solid #85868a;border-radius:2px;background:#414244'></div>
<svg class='abs' style='left:1244.0px;top:557.0px' width='10' height='10' viewBox='0 0 10 10'><path d='M1.9 0.9 H6.2 L8.1 2.8 V9 H1.9 Z' fill='#22ad48'/><path d='M6.2 0.9 V2.8 H8.1 Z' fill='#6fd08a'/><rect x='3.6' y='5.2' width='2.8' height='2' rx='0.6' fill='#c9efd2'/></svg>
<div class='abs' style='left:1238px;top:559.7px;width:2px;height:3.6px;background:#b4b5ba;border-radius:0.5px'></div>
<div class='abs' style='left:1257px;top:560.0px;width:3px;height:3px;background:#c6c7cc;border-radius:50%'></div>
<div class='t' style='left:1249.0px;top:574.4px;font-size:3.2px;color:#f6f6f6;font-weight:700;transform:translateX(-50%)'>Sheet - HUMAN - Thanh lý</div>
<div class='t' style='left:1249.0px;top:578.4px;font-size:2.8px;color:#9a9a9e;transform:translateX(-50%)'>append : sheet</div>
<div class='abs' style='left:1098px;top:579px;width:20px;height:20px;border:1px solid #85868a;border-radius:2px;background:#414244'></div>
<svg class='abs' style='left:1103.0px;top:584.0px' width='10' height='10' viewBox='0 0 10 10'><circle cx='5' cy='5' r='4' fill='#1a77f2'/><path d='M5.6 9 V5.6 H6.6 L6.8 4.5 H5.6 V3.9 C5.6 3.5 5.8 3.3 6.2 3.3 H6.9 V2.3 H6 C5 2.3 4.5 2.9 4.5 3.8 V4.5 H3.5 V5.6 H4.5 V9 Z' fill='#fff'/></svg>
<div class='abs' style='left:1097px;top:586.7px;width:2px;height:3.6px;background:#b4b5ba;border-radius:0.5px'></div>
<div class='abs' style='left:1116px;top:587.0px;width:3px;height:3px;background:#c6c7cc;border-radius:50%'></div>
<div class='t' style='left:1108.0px;top:601.4px;font-size:3.2px;color:#f6f6f6;font-weight:700;transform:translateX(-50%)'>SPC SILICONE - 02</div>
<div class='abs' style='left:1149px;top:579px;width:20px;height:20px;border:1px solid #85868a;border-radius:2px;background:#414244'></div>
<svg class='abs' style='left:1154.0px;top:584.0px' width='10' height='10' viewBox='0 0 10 10'><path d='M3.6 1.4 Q2.6 1.4 2.6 2.4 V4.2 Q2.6 5 1.6 5 Q2.6 5 2.6 5.8 V7.6 Q2.6 8.6 3.6 8.6' fill='none' stroke='#f29e22' stroke-width='1.1'/><path d='M6.4 1.4 Q7.4 1.4 7.4 2.4 V4.2 Q7.4 5 8.4 5 Q7.4 5 7.4 5.8 V7.6 Q7.4 8.6 6.4 8.6' fill='none' stroke='#f29e22' stroke-width='1.1'/></svg>
<div class='abs' style='left:1148px;top:586.7px;width:2px;height:3.6px;background:#b4b5ba;border-radius:0.5px'></div>
<div class='abs' style='left:1167px;top:587.0px;width:3px;height:3px;background:#c6c7cc;border-radius:50%'></div>
<div class='t' style='left:1159.0px;top:601.4px;font-size:3.2px;color:#f6f6f6;font-weight:700;transform:translateX(-50%)'>Lọc - SPC SILICONE - 02</div>
<div class='abs' style='left:1195px;top:579px;width:20px;height:20px;border:1px solid #85868a;border-radius:2px;background:#414244'></div>
<svg class='abs' style='left:1200.0px;top:584.0px' width='10' height='10' viewBox='0 0 10 10'><circle cx='5' cy='5' r='3.9' fill='#f58aa0'/><path d='M3.85 3.6 V6.4 M6.15 3.6 V6.4' stroke='#2e2e30' stroke-width='0.85'/></svg>
<div class='abs' style='left:1194px;top:586.7px;width:2px;height:3.6px;background:#b4b5ba;border-radius:0.5px'></div>
<div class='abs' style='left:1213px;top:587.0px;width:3px;height:3px;background:#c6c7cc;border-radius:50%'></div>
<div class='t' style='left:1205.0px;top:601.4px;font-size:3.2px;color:#f6f6f6;font-weight:700;transform:translateX(-50%)'>Wait2</div>
<div class='abs' style='left:1239px;top:579px;width:20px;height:20px;border:1px solid #85868a;border-radius:2px;background:#414244'></div>
<svg class='abs' style='left:1244.0px;top:584.0px' width='10' height='10' viewBox='0 0 10 10'><path d='M1.9 0.9 H6.2 L8.1 2.8 V9 H1.9 Z' fill='#22ad48'/><path d='M6.2 0.9 V2.8 H8.1 Z' fill='#6fd08a'/><rect x='3.6' y='5.2' width='2.8' height='2' rx='0.6' fill='#c9efd2'/></svg>
<div class='abs' style='left:1238px;top:586.7px;width:2px;height:3.6px;background:#b4b5ba;border-radius:0.5px'></div>
<div class='abs' style='left:1257px;top:587.0px;width:3px;height:3px;background:#c6c7cc;border-radius:50%'></div>
<div class='t' style='left:1249.0px;top:601.4px;font-size:3.2px;color:#f6f6f6;font-weight:700;transform:translateX(-50%)'>Sheet - SPC SILICONE - 02</div>
<div class='t' style='left:1249.0px;top:605.4px;font-size:2.8px;color:#9a9a9e;transform:translateX(-50%)'>append : sheet</div>
<div class='abs' style='left:1098px;top:606px;width:20px;height:20px;border:1px solid #85868a;border-radius:2px;background:#414244'></div>
<svg class='abs' style='left:1103.0px;top:611.0px' width='10' height='10' viewBox='0 0 10 10'><circle cx='5' cy='5' r='4' fill='#1a77f2'/><path d='M5.6 9 V5.6 H6.6 L6.8 4.5 H5.6 V3.9 C5.6 3.5 5.8 3.3 6.2 3.3 H6.9 V2.3 H6 C5 2.3 4.5 2.9 4.5 3.8 V4.5 H3.5 V5.6 H4.5 V9 Z' fill='#fff'/></svg>
<div class='abs' style='left:1097px;top:613.7px;width:2px;height:3.6px;background:#b4b5ba;border-radius:0.5px'></div>
<div class='abs' style='left:1116px;top:614.0px;width:3px;height:3px;background:#c6c7cc;border-radius:50%'></div>
<div class='t' style='left:1108.0px;top:628.4px;font-size:3.2px;color:#f6f6f6;font-weight:700;transform:translateX(-50%)'>SPC SILICONE - 01</div>
<div class='abs' style='left:1149px;top:606px;width:20px;height:20px;border:1px solid #85868a;border-radius:2px;background:#414244'></div>
<svg class='abs' style='left:1154.0px;top:611.0px' width='10' height='10' viewBox='0 0 10 10'><path d='M3.6 1.4 Q2.6 1.4 2.6 2.4 V4.2 Q2.6 5 1.6 5 Q2.6 5 2.6 5.8 V7.6 Q2.6 8.6 3.6 8.6' fill='none' stroke='#f29e22' stroke-width='1.1'/><path d='M6.4 1.4 Q7.4 1.4 7.4 2.4 V4.2 Q7.4 5 8.4 5 Q7.4 5 7.4 5.8 V7.6 Q7.4 8.6 6.4 8.6' fill='none' stroke='#f29e22' stroke-width='1.1'/></svg>
<div class='abs' style='left:1148px;top:613.7px;width:2px;height:3.6px;background:#b4b5ba;border-radius:0.5px'></div>
<div class='abs' style='left:1167px;top:614.0px;width:3px;height:3px;background:#c6c7cc;border-radius:50%'></div>
<div class='t' style='left:1159.0px;top:628.4px;font-size:3.2px;color:#f6f6f6;font-weight:700;transform:translateX(-50%)'>Lọc - SPC SILICONE - 01</div>
<div class='abs' style='left:1195px;top:606px;width:20px;height:20px;border:1px solid #85868a;border-radius:2px;background:#414244'></div>
<svg class='abs' style='left:1200.0px;top:611.0px' width='10' height='10' viewBox='0 0 10 10'><circle cx='5' cy='5' r='3.9' fill='#f58aa0'/><path d='M3.85 3.6 V6.4 M6.15 3.6 V6.4' stroke='#2e2e30' stroke-width='0.85'/></svg>
<div class='abs' style='left:1194px;top:613.7px;width:2px;height:3.6px;background:#b4b5ba;border-radius:0.5px'></div>
<div class='abs' style='left:1213px;top:614.0px;width:3px;height:3px;background:#c6c7cc;border-radius:50%'></div>
<div class='t' style='left:1205.0px;top:628.4px;font-size:3.2px;color:#f6f6f6;font-weight:700;transform:translateX(-50%)'>Wait3</div>
<div class='abs' style='left:1239px;top:606px;width:20px;height:20px;border:1px solid #85868a;border-radius:2px;background:#414244'></div>
<svg class='abs' style='left:1244.0px;top:611.0px' width='10' height='10' viewBox='0 0 10 10'><path d='M1.9 0.9 H6.2 L8.1 2.8 V9 H1.9 Z' fill='#22ad48'/><path d='M6.2 0.9 V2.8 H8.1 Z' fill='#6fd08a'/><rect x='3.6' y='5.2' width='2.8' height='2' rx='0.6' fill='#c9efd2'/></svg>
<div class='abs' style='left:1238px;top:613.7px;width:2px;height:3.6px;background:#b4b5ba;border-radius:0.5px'></div>
<div class='abs' style='left:1257px;top:614.0px;width:3px;height:3px;background:#c6c7cc;border-radius:50%'></div>
<div class='t' style='left:1249.0px;top:628.4px;font-size:3.2px;color:#f6f6f6;font-weight:700;transform:translateX(-50%)'>Sheet - SPC SILICONE - 01</div>
<div class='t' style='left:1249.0px;top:632.4px;font-size:2.8px;color:#9a9a9e;transform:translateX(-50%)'>append : sheet</div>
<div class='abs' style='left:1098px;top:634px;width:20px;height:20px;border:1px solid #85868a;border-radius:2px;background:#414244'></div>
<svg class='abs' style='left:1103.0px;top:639.0px' width='10' height='10' viewBox='0 0 10 10'><circle cx='5' cy='5' r='4' fill='#1a77f2'/><path d='M5.6 9 V5.6 H6.6 L6.8 4.5 H5.6 V3.9 C5.6 3.5 5.8 3.3 6.2 3.3 H6.9 V2.3 H6 C5 2.3 4.5 2.9 4.5 3.8 V4.5 H3.5 V5.6 H4.5 V9 Z' fill='#fff'/></svg>
<div class='abs' style='left:1097px;top:641.7px;width:2px;height:3.6px;background:#b4b5ba;border-radius:0.5px'></div>
<div class='abs' style='left:1116px;top:642.0px;width:3px;height:3px;background:#c6c7cc;border-radius:50%'></div>
<div class='t' style='left:1108.0px;top:656.4px;font-size:3.2px;color:#f6f6f6;font-weight:700;transform:translateX(-50%)'>SPC TAI KHOAN - 01</div>
<div class='abs' style='left:1149px;top:634px;width:20px;height:20px;border:1px solid #85868a;border-radius:2px;background:#414244'></div>
<svg class='abs' style='left:1154.0px;top:639.0px' width='10' height='10' viewBox='0 0 10 10'><path d='M3.6 1.4 Q2.6 1.4 2.6 2.4 V4.2 Q2.6 5 1.6 5 Q2.6 5 2.6 5.8 V7.6 Q2.6 8.6 3.6 8.6' fill='none' stroke='#f29e22' stroke-width='1.1'/><path d='M6.4 1.4 Q7.4 1.4 7.4 2.4 V4.2 Q7.4 5 8.4 5 Q7.4 5 7.4 5.8 V7.6 Q7.4 8.6 6.4 8.6' fill='none' stroke='#f29e22' stroke-width='1.1'/></svg>
<div class='abs' style='left:1148px;top:641.7px;width:2px;height:3.6px;background:#b4b5ba;border-radius:0.5px'></div>
<div class='abs' style='left:1167px;top:642.0px;width:3px;height:3px;background:#c6c7cc;border-radius:50%'></div>
<div class='t' style='left:1159.0px;top:656.4px;font-size:3.2px;color:#f6f6f6;font-weight:700;transform:translateX(-50%)'>Lọc - SPC TAI KHOAN - 01</div>
<div class='abs' style='left:1195px;top:634px;width:20px;height:20px;border:1px solid #85868a;border-radius:2px;background:#414244'></div>
<svg class='abs' style='left:1200.0px;top:639.0px' width='10' height='10' viewBox='0 0 10 10'><circle cx='5' cy='5' r='3.9' fill='#f58aa0'/><path d='M3.85 3.6 V6.4 M6.15 3.6 V6.4' stroke='#2e2e30' stroke-width='0.85'/></svg>
<div class='abs' style='left:1194px;top:641.7px;width:2px;height:3.6px;background:#b4b5ba;border-radius:0.5px'></div>
<div class='abs' style='left:1213px;top:642.0px;width:3px;height:3px;background:#c6c7cc;border-radius:50%'></div>
<div class='t' style='left:1205.0px;top:656.4px;font-size:3.2px;color:#f6f6f6;font-weight:700;transform:translateX(-50%)'>Wait4</div>
<div class='abs' style='left:1239px;top:634px;width:20px;height:20px;border:1px solid #85868a;border-radius:2px;background:#414244'></div>
<svg class='abs' style='left:1244.0px;top:639.0px' width='10' height='10' viewBox='0 0 10 10'><path d='M1.9 0.9 H6.2 L8.1 2.8 V9 H1.9 Z' fill='#22ad48'/><path d='M6.2 0.9 V2.8 H8.1 Z' fill='#6fd08a'/><rect x='3.6' y='5.2' width='2.8' height='2' rx='0.6' fill='#c9efd2'/></svg>
<div class='abs' style='left:1238px;top:641.7px;width:2px;height:3.6px;background:#b4b5ba;border-radius:0.5px'></div>
<div class='abs' style='left:1257px;top:642.0px;width:3px;height:3px;background:#c6c7cc;border-radius:50%'></div>
<div class='t' style='left:1249.0px;top:656.4px;font-size:3.2px;color:#f6f6f6;font-weight:700;transform:translateX(-50%)'>Sheet - SPC TAI KHOAN - 01</div>
<div class='t' style='left:1249.0px;top:660.4px;font-size:2.8px;color:#9a9a9e;transform:translateX(-50%)'>append : sheet</div>
<div class='abs' style='left:1098px;top:661px;width:20px;height:20px;border:1px solid #85868a;border-radius:2px;background:#414244'></div>
<svg class='abs' style='left:1103.0px;top:666.0px' width='10' height='10' viewBox='0 0 10 10'><circle cx='5' cy='5' r='4' fill='#1a77f2'/><path d='M5.6 9 V5.6 H6.6 L6.8 4.5 H5.6 V3.9 C5.6 3.5 5.8 3.3 6.2 3.3 H6.9 V2.3 H6 C5 2.3 4.5 2.9 4.5 3.8 V4.5 H3.5 V5.6 H4.5 V9 Z' fill='#fff'/></svg>
<div class='abs' style='left:1097px;top:668.7px;width:2px;height:3.6px;background:#b4b5ba;border-radius:0.5px'></div>
<div class='abs' style='left:1116px;top:669.0px;width:3px;height:3px;background:#c6c7cc;border-radius:50%'></div>
<div class='t' style='left:1108.0px;top:683.4px;font-size:3.2px;color:#f6f6f6;font-weight:700;transform:translateX(-50%)'>Vật Liệu Mới 01 Mới</div>
<div class='abs' style='left:1149px;top:661px;width:20px;height:20px;border:1px solid #85868a;border-radius:2px;background:#414244'></div>
<svg class='abs' style='left:1154.0px;top:666.0px' width='10' height='10' viewBox='0 0 10 10'><path d='M3.6 1.4 Q2.6 1.4 2.6 2.4 V4.2 Q2.6 5 1.6 5 Q2.6 5 2.6 5.8 V7.6 Q2.6 8.6 3.6 8.6' fill='none' stroke='#f29e22' stroke-width='1.1'/><path d='M6.4 1.4 Q7.4 1.4 7.4 2.4 V4.2 Q7.4 5 8.4 5 Q7.4 5 7.4 5.8 V7.6 Q7.4 8.6 6.4 8.6' fill='none' stroke='#f29e22' stroke-width='1.1'/></svg>
<div class='abs' style='left:1148px;top:668.7px;width:2px;height:3.6px;background:#b4b5ba;border-radius:0.5px'></div>
<div class='abs' style='left:1167px;top:669.0px;width:3px;height:3px;background:#c6c7cc;border-radius:50%'></div>
<div class='t' style='left:1159.0px;top:683.4px;font-size:3.2px;color:#f6f6f6;font-weight:700;transform:translateX(-50%)'>Lọc - Vật Liệu Mới 01 Mới</div>
<div class='abs' style='left:1195px;top:661px;width:20px;height:20px;border:1px solid #85868a;border-radius:2px;background:#414244'></div>
<svg class='abs' style='left:1200.0px;top:666.0px' width='10' height='10' viewBox='0 0 10 10'><circle cx='5' cy='5' r='3.9' fill='#f58aa0'/><path d='M3.85 3.6 V6.4 M6.15 3.6 V6.4' stroke='#2e2e30' stroke-width='0.85'/></svg>
<div class='abs' style='left:1194px;top:668.7px;width:2px;height:3.6px;background:#b4b5ba;border-radius:0.5px'></div>
<div class='abs' style='left:1213px;top:669.0px;width:3px;height:3px;background:#c6c7cc;border-radius:50%'></div>
<div class='t' style='left:1205.0px;top:683.4px;font-size:3.2px;color:#f6f6f6;font-weight:700;transform:translateX(-50%)'>Wait5</div>
<div class='abs' style='left:1239px;top:661px;width:20px;height:20px;border:1px solid #85868a;border-radius:2px;background:#414244'></div>
<svg class='abs' style='left:1244.0px;top:666.0px' width='10' height='10' viewBox='0 0 10 10'><path d='M1.9 0.9 H6.2 L8.1 2.8 V9 H1.9 Z' fill='#22ad48'/><path d='M6.2 0.9 V2.8 H8.1 Z' fill='#6fd08a'/><rect x='3.6' y='5.2' width='2.8' height='2' rx='0.6' fill='#c9efd2'/></svg>
<div class='abs' style='left:1238px;top:668.7px;width:2px;height:3.6px;background:#b4b5ba;border-radius:0.5px'></div>
<div class='abs' style='left:1257px;top:669.0px;width:3px;height:3px;background:#c6c7cc;border-radius:50%'></div>
<div class='t' style='left:1249.0px;top:683.4px;font-size:3.2px;color:#f6f6f6;font-weight:700;transform:translateX(-50%)'>Sheet - Vật Liệu Mới 01 Mới</div>
<div class='t' style='left:1249.0px;top:687.4px;font-size:2.8px;color:#9a9a9e;transform:translateX(-50%)'>append : sheet</div>
<div class='abs' style='left:1098px;top:743px;width:20px;height:20px;border:1px solid #85868a;border-radius:2px;background:#414244'></div>
<svg class='abs' style='left:1103.0px;top:748.0px' width='10' height='10' viewBox='0 0 10 10'><circle cx='5' cy='5' r='4' fill='#1a77f2'/><path d='M5.6 9 V5.6 H6.6 L6.8 4.5 H5.6 V3.9 C5.6 3.5 5.8 3.3 6.2 3.3 H6.9 V2.3 H6 C5 2.3 4.5 2.9 4.5 3.8 V4.5 H3.5 V5.6 H4.5 V9 Z' fill='#fff'/></svg>
<div class='abs' style='left:1097px;top:750.7px;width:2px;height:3.6px;background:#b4b5ba;border-radius:0.5px'></div>
<div class='abs' style='left:1116px;top:751.0px;width:3px;height:3px;background:#c6c7cc;border-radius:50%'></div>
<div class='t' style='left:1108.0px;top:765.4px;font-size:3.2px;color:#f6f6f6;font-weight:700;transform:translateX(-50%)'>SPC 001</div>
<div class='abs' style='left:1153px;top:743px;width:20px;height:20px;border:1px solid #85868a;border-radius:2px;background:#414244'></div>
<svg class='abs' style='left:1158.0px;top:748.0px' width='10' height='10' viewBox='0 0 10 10'><path d='M3.6 1.4 Q2.6 1.4 2.6 2.4 V4.2 Q2.6 5 1.6 5 Q2.6 5 2.6 5.8 V7.6 Q2.6 8.6 3.6 8.6' fill='none' stroke='#f29e22' stroke-width='1.1'/><path d='M6.4 1.4 Q7.4 1.4 7.4 2.4 V4.2 Q7.4 5 8.4 5 Q7.4 5 7.4 5.8 V7.6 Q7.4 8.6 6.4 8.6' fill='none' stroke='#f29e22' stroke-width='1.1'/></svg>
<div class='abs' style='left:1152px;top:750.7px;width:2px;height:3.6px;background:#b4b5ba;border-radius:0.5px'></div>
<div class='abs' style='left:1171px;top:751.0px;width:3px;height:3px;background:#c6c7cc;border-radius:50%'></div>
<div class='t' style='left:1163.0px;top:765.4px;font-size:3.2px;color:#f6f6f6;font-weight:700;transform:translateX(-50%)'>Lọc - SPC 001</div>
<div class='abs' style='left:1196px;top:743px;width:20px;height:20px;border:1px solid #85868a;border-radius:2px;background:#414244'></div>
<svg class='abs' style='left:1201.0px;top:748.0px' width='10' height='10' viewBox='0 0 10 10'><circle cx='5' cy='5' r='3.9' fill='#f58aa0'/><path d='M3.85 3.6 V6.4 M6.15 3.6 V6.4' stroke='#2e2e30' stroke-width='0.85'/></svg>
<div class='abs' style='left:1195px;top:750.7px;width:2px;height:3.6px;background:#b4b5ba;border-radius:0.5px'></div>
<div class='abs' style='left:1214px;top:751.0px;width:3px;height:3px;background:#c6c7cc;border-radius:50%'></div>
<div class='t' style='left:1206.0px;top:765.4px;font-size:3.2px;color:#f6f6f6;font-weight:700;transform:translateX(-50%)'>Wait1</div>
<div class='abs' style='left:1239px;top:743px;width:20px;height:20px;border:1px solid #85868a;border-radius:2px;background:#414244'></div>
<svg class='abs' style='left:1244.0px;top:748.0px' width='10' height='10' viewBox='0 0 10 10'><path d='M1.9 0.9 H6.2 L8.1 2.8 V9 H1.9 Z' fill='#22ad48'/><path d='M6.2 0.9 V2.8 H8.1 Z' fill='#6fd08a'/><rect x='3.6' y='5.2' width='2.8' height='2' rx='0.6' fill='#c9efd2'/></svg>
<div class='abs' style='left:1238px;top:750.7px;width:2px;height:3.6px;background:#b4b5ba;border-radius:0.5px'></div>
<div class='abs' style='left:1257px;top:751.0px;width:3px;height:3px;background:#c6c7cc;border-radius:50%'></div>
<div class='t' style='left:1249.0px;top:765.4px;font-size:3.2px;color:#f6f6f6;font-weight:700;transform:translateX(-50%)'>Sheet - SPC 001</div>
<div class='t' style='left:1249.0px;top:769.4px;font-size:2.8px;color:#9a9a9e;transform:translateX(-50%)'>append : sheet</div>
<div class='abs' style='left:1098px;top:774px;width:20px;height:20px;border:1px solid #85868a;border-radius:2px;background:#414244'></div>
<svg class='abs' style='left:1103.0px;top:779.0px' width='10' height='10' viewBox='0 0 10 10'><circle cx='5' cy='5' r='4' fill='#1a77f2'/><path d='M5.6 9 V5.6 H6.6 L6.8 4.5 H5.6 V3.9 C5.6 3.5 5.8 3.3 6.2 3.3 H6.9 V2.3 H6 C5 2.3 4.5 2.9 4.5 3.8 V4.5 H3.5 V5.6 H4.5 V9 Z' fill='#fff'/></svg>
<div class='abs' style='left:1097px;top:781.7px;width:2px;height:3.6px;background:#b4b5ba;border-radius:0.5px'></div>
<div class='abs' style='left:1116px;top:782.0px;width:3px;height:3px;background:#c6c7cc;border-radius:50%'></div>
<div class='t' style='left:1108.0px;top:796.4px;font-size:3.2px;color:#f6f6f6;font-weight:700;transform:translateX(-50%)'>SPC 002</div>
<div class='abs' style='left:1153px;top:774px;width:20px;height:20px;border:1px solid #85868a;border-radius:2px;background:#414244'></div>
<svg class='abs' style='left:1158.0px;top:779.0px' width='10' height='10' viewBox='0 0 10 10'><path d='M3.6 1.4 Q2.6 1.4 2.6 2.4 V4.2 Q2.6 5 1.6 5 Q2.6 5 2.6 5.8 V7.6 Q2.6 8.6 3.6 8.6' fill='none' stroke='#f29e22' stroke-width='1.1'/><path d='M6.4 1.4 Q7.4 1.4 7.4 2.4 V4.2 Q7.4 5 8.4 5 Q7.4 5 7.4 5.8 V7.6 Q7.4 8.6 6.4 8.6' fill='none' stroke='#f29e22' stroke-width='1.1'/></svg>
<div class='abs' style='left:1152px;top:781.7px;width:2px;height:3.6px;background:#b4b5ba;border-radius:0.5px'></div>
<div class='abs' style='left:1171px;top:782.0px;width:3px;height:3px;background:#c6c7cc;border-radius:50%'></div>
<div class='t' style='left:1163.0px;top:796.4px;font-size:3.2px;color:#f6f6f6;font-weight:700;transform:translateX(-50%)'>Lọc - SPC 002</div>
<div class='abs' style='left:1196px;top:774px;width:20px;height:20px;border:1px solid #85868a;border-radius:2px;background:#414244'></div>
<svg class='abs' style='left:1201.0px;top:779.0px' width='10' height='10' viewBox='0 0 10 10'><circle cx='5' cy='5' r='3.9' fill='#f58aa0'/><path d='M3.85 3.6 V6.4 M6.15 3.6 V6.4' stroke='#2e2e30' stroke-width='0.85'/></svg>
<div class='abs' style='left:1195px;top:781.7px;width:2px;height:3.6px;background:#b4b5ba;border-radius:0.5px'></div>
<div class='abs' style='left:1214px;top:782.0px;width:3px;height:3px;background:#c6c7cc;border-radius:50%'></div>
<div class='t' style='left:1206.0px;top:796.4px;font-size:3.2px;color:#f6f6f6;font-weight:700;transform:translateX(-50%)'>Wait2</div>
<div class='abs' style='left:1239px;top:774px;width:20px;height:20px;border:1px solid #85868a;border-radius:2px;background:#414244'></div>
<svg class='abs' style='left:1244.0px;top:779.0px' width='10' height='10' viewBox='0 0 10 10'><path d='M1.9 0.9 H6.2 L8.1 2.8 V9 H1.9 Z' fill='#22ad48'/><path d='M6.2 0.9 V2.8 H8.1 Z' fill='#6fd08a'/><rect x='3.6' y='5.2' width='2.8' height='2' rx='0.6' fill='#c9efd2'/></svg>
<div class='abs' style='left:1238px;top:781.7px;width:2px;height:3.6px;background:#b4b5ba;border-radius:0.5px'></div>
<div class='abs' style='left:1257px;top:782.0px;width:3px;height:3px;background:#c6c7cc;border-radius:50%'></div>
<div class='t' style='left:1249.0px;top:796.4px;font-size:3.2px;color:#f6f6f6;font-weight:700;transform:translateX(-50%)'>Sheet - SPC 002</div>
<div class='t' style='left:1249.0px;top:800.4px;font-size:2.8px;color:#9a9a9e;transform:translateX(-50%)'>append : sheet</div>
<div class='abs' style='left:1098px;top:805px;width:20px;height:20px;border:1px solid #85868a;border-radius:2px;background:#414244'></div>
<svg class='abs' style='left:1103.0px;top:810.0px' width='10' height='10' viewBox='0 0 10 10'><circle cx='5' cy='5' r='4' fill='#1a77f2'/><path d='M5.6 9 V5.6 H6.6 L6.8 4.5 H5.6 V3.9 C5.6 3.5 5.8 3.3 6.2 3.3 H6.9 V2.3 H6 C5 2.3 4.5 2.9 4.5 3.8 V4.5 H3.5 V5.6 H4.5 V9 Z' fill='#fff'/></svg>
<div class='abs' style='left:1097px;top:812.7px;width:2px;height:3.6px;background:#b4b5ba;border-radius:0.5px'></div>
<div class='abs' style='left:1116px;top:813.0px;width:3px;height:3px;background:#c6c7cc;border-radius:50%'></div>
<div class='t' style='left:1108.0px;top:827.4px;font-size:3.2px;color:#f6f6f6;font-weight:700;transform:translateX(-50%)'>SPC 003</div>
<div class='abs' style='left:1153px;top:805px;width:20px;height:20px;border:1px solid #85868a;border-radius:2px;background:#414244'></div>
<svg class='abs' style='left:1158.0px;top:810.0px' width='10' height='10' viewBox='0 0 10 10'><path d='M3.6 1.4 Q2.6 1.4 2.6 2.4 V4.2 Q2.6 5 1.6 5 Q2.6 5 2.6 5.8 V7.6 Q2.6 8.6 3.6 8.6' fill='none' stroke='#f29e22' stroke-width='1.1'/><path d='M6.4 1.4 Q7.4 1.4 7.4 2.4 V4.2 Q7.4 5 8.4 5 Q7.4 5 7.4 5.8 V7.6 Q7.4 8.6 6.4 8.6' fill='none' stroke='#f29e22' stroke-width='1.1'/></svg>
<div class='abs' style='left:1152px;top:812.7px;width:2px;height:3.6px;background:#b4b5ba;border-radius:0.5px'></div>
<div class='abs' style='left:1171px;top:813.0px;width:3px;height:3px;background:#c6c7cc;border-radius:50%'></div>
<div class='t' style='left:1163.0px;top:827.4px;font-size:3.2px;color:#f6f6f6;font-weight:700;transform:translateX(-50%)'>Lọc - SPC 003</div>
<div class='abs' style='left:1196px;top:805px;width:20px;height:20px;border:1px solid #85868a;border-radius:2px;background:#414244'></div>
<svg class='abs' style='left:1201.0px;top:810.0px' width='10' height='10' viewBox='0 0 10 10'><circle cx='5' cy='5' r='3.9' fill='#f58aa0'/><path d='M3.85 3.6 V6.4 M6.15 3.6 V6.4' stroke='#2e2e30' stroke-width='0.85'/></svg>
<div class='abs' style='left:1195px;top:812.7px;width:2px;height:3.6px;background:#b4b5ba;border-radius:0.5px'></div>
<div class='abs' style='left:1214px;top:813.0px;width:3px;height:3px;background:#c6c7cc;border-radius:50%'></div>
<div class='t' style='left:1206.0px;top:827.4px;font-size:3.2px;color:#f6f6f6;font-weight:700;transform:translateX(-50%)'>Wait3</div>
<div class='abs' style='left:1239px;top:805px;width:20px;height:20px;border:1px solid #85868a;border-radius:2px;background:#414244'></div>
<svg class='abs' style='left:1244.0px;top:810.0px' width='10' height='10' viewBox='0 0 10 10'><path d='M1.9 0.9 H6.2 L8.1 2.8 V9 H1.9 Z' fill='#22ad48'/><path d='M6.2 0.9 V2.8 H8.1 Z' fill='#6fd08a'/><rect x='3.6' y='5.2' width='2.8' height='2' rx='0.6' fill='#c9efd2'/></svg>
<div class='abs' style='left:1238px;top:812.7px;width:2px;height:3.6px;background:#b4b5ba;border-radius:0.5px'></div>
<div class='abs' style='left:1257px;top:813.0px;width:3px;height:3px;background:#c6c7cc;border-radius:50%'></div>
<div class='t' style='left:1249.0px;top:827.4px;font-size:3.2px;color:#f6f6f6;font-weight:700;transform:translateX(-50%)'>Sheet - SPC 003</div>
<div class='t' style='left:1249.0px;top:831.4px;font-size:2.8px;color:#9a9a9e;transform:translateX(-50%)'>append : sheet</div>
<div class='abs' style='left:1098px;top:837px;width:20px;height:20px;border:1px solid #85868a;border-radius:2px;background:#414244'></div>
<svg class='abs' style='left:1103.0px;top:842.0px' width='10' height='10' viewBox='0 0 10 10'><circle cx='5' cy='5' r='4' fill='#1a77f2'/><path d='M5.6 9 V5.6 H6.6 L6.8 4.5 H5.6 V3.9 C5.6 3.5 5.8 3.3 6.2 3.3 H6.9 V2.3 H6 C5 2.3 4.5 2.9 4.5 3.8 V4.5 H3.5 V5.6 H4.5 V9 Z' fill='#fff'/></svg>
<div class='abs' style='left:1097px;top:844.7px;width:2px;height:3.6px;background:#b4b5ba;border-radius:0.5px'></div>
<div class='abs' style='left:1116px;top:845.0px;width:3px;height:3px;background:#c6c7cc;border-radius:50%'></div>
<div class='t' style='left:1108.0px;top:859.4px;font-size:3.2px;color:#f6f6f6;font-weight:700;transform:translateX(-50%)'>SPC 004</div>
<div class='abs' style='left:1153px;top:837px;width:20px;height:20px;border:1px solid #85868a;border-radius:2px;background:#414244'></div>
<svg class='abs' style='left:1158.0px;top:842.0px' width='10' height='10' viewBox='0 0 10 10'><path d='M3.6 1.4 Q2.6 1.4 2.6 2.4 V4.2 Q2.6 5 1.6 5 Q2.6 5 2.6 5.8 V7.6 Q2.6 8.6 3.6 8.6' fill='none' stroke='#f29e22' stroke-width='1.1'/><path d='M6.4 1.4 Q7.4 1.4 7.4 2.4 V4.2 Q7.4 5 8.4 5 Q7.4 5 7.4 5.8 V7.6 Q7.4 8.6 6.4 8.6' fill='none' stroke='#f29e22' stroke-width='1.1'/></svg>
<div class='abs' style='left:1152px;top:844.7px;width:2px;height:3.6px;background:#b4b5ba;border-radius:0.5px'></div>
<div class='abs' style='left:1171px;top:845.0px;width:3px;height:3px;background:#c6c7cc;border-radius:50%'></div>
<div class='t' style='left:1163.0px;top:859.4px;font-size:3.2px;color:#f6f6f6;font-weight:700;transform:translateX(-50%)'>Lọc - SPC 004</div>
<div class='abs' style='left:1196px;top:837px;width:20px;height:20px;border:1px solid #85868a;border-radius:2px;background:#414244'></div>
<svg class='abs' style='left:1201.0px;top:842.0px' width='10' height='10' viewBox='0 0 10 10'><circle cx='5' cy='5' r='3.9' fill='#f58aa0'/><path d='M3.85 3.6 V6.4 M6.15 3.6 V6.4' stroke='#2e2e30' stroke-width='0.85'/></svg>
<div class='abs' style='left:1195px;top:844.7px;width:2px;height:3.6px;background:#b4b5ba;border-radius:0.5px'></div>
<div class='abs' style='left:1214px;top:845.0px;width:3px;height:3px;background:#c6c7cc;border-radius:50%'></div>
<div class='t' style='left:1206.0px;top:859.4px;font-size:3.2px;color:#f6f6f6;font-weight:700;transform:translateX(-50%)'>Wait4</div>
<div class='abs' style='left:1239px;top:837px;width:20px;height:20px;border:1px solid #85868a;border-radius:2px;background:#414244'></div>
<svg class='abs' style='left:1244.0px;top:842.0px' width='10' height='10' viewBox='0 0 10 10'><path d='M1.9 0.9 H6.2 L8.1 2.8 V9 H1.9 Z' fill='#22ad48'/><path d='M6.2 0.9 V2.8 H8.1 Z' fill='#6fd08a'/><rect x='3.6' y='5.2' width='2.8' height='2' rx='0.6' fill='#c9efd2'/></svg>
<div class='abs' style='left:1238px;top:844.7px;width:2px;height:3.6px;background:#b4b5ba;border-radius:0.5px'></div>
<div class='abs' style='left:1257px;top:845.0px;width:3px;height:3px;background:#c6c7cc;border-radius:50%'></div>
<div class='t' style='left:1249.0px;top:859.4px;font-size:3.2px;color:#f6f6f6;font-weight:700;transform:translateX(-50%)'>Sheet - SPC 004</div>
<div class='t' style='left:1249.0px;top:863.4px;font-size:2.8px;color:#9a9a9e;transform:translateX(-50%)'>append : sheet</div>
<div class='abs' style='left:1098px;top:864px;width:20px;height:20px;border:1px solid #85868a;border-radius:2px;background:#414244'></div>
<svg class='abs' style='left:1103.0px;top:869.0px' width='10' height='10' viewBox='0 0 10 10'><circle cx='5' cy='5' r='4' fill='#1a77f2'/><path d='M5.6 9 V5.6 H6.6 L6.8 4.5 H5.6 V3.9 C5.6 3.5 5.8 3.3 6.2 3.3 H6.9 V2.3 H6 C5 2.3 4.5 2.9 4.5 3.8 V4.5 H3.5 V5.6 H4.5 V9 Z' fill='#fff'/></svg>
<div class='abs' style='left:1097px;top:871.7px;width:2px;height:3.6px;background:#b4b5ba;border-radius:0.5px'></div>
<div class='abs' style='left:1116px;top:872.0px;width:3px;height:3px;background:#c6c7cc;border-radius:50%'></div>
<div class='t' style='left:1108.0px;top:886.4px;font-size:3.2px;color:#f6f6f6;font-weight:700;transform:translateX(-50%)'>SPC 005</div>
<div class='abs' style='left:1153px;top:864px;width:20px;height:20px;border:1px solid #85868a;border-radius:2px;background:#414244'></div>
<svg class='abs' style='left:1158.0px;top:869.0px' width='10' height='10' viewBox='0 0 10 10'><path d='M3.6 1.4 Q2.6 1.4 2.6 2.4 V4.2 Q2.6 5 1.6 5 Q2.6 5 2.6 5.8 V7.6 Q2.6 8.6 3.6 8.6' fill='none' stroke='#f29e22' stroke-width='1.1'/><path d='M6.4 1.4 Q7.4 1.4 7.4 2.4 V4.2 Q7.4 5 8.4 5 Q7.4 5 7.4 5.8 V7.6 Q7.4 8.6 6.4 8.6' fill='none' stroke='#f29e22' stroke-width='1.1'/></svg>
<div class='abs' style='left:1152px;top:871.7px;width:2px;height:3.6px;background:#b4b5ba;border-radius:0.5px'></div>
<div class='abs' style='left:1171px;top:872.0px;width:3px;height:3px;background:#c6c7cc;border-radius:50%'></div>
<div class='t' style='left:1163.0px;top:886.4px;font-size:3.2px;color:#f6f6f6;font-weight:700;transform:translateX(-50%)'>Lọc - SPC 005</div>
<div class='abs' style='left:1196px;top:864px;width:20px;height:20px;border:1px solid #85868a;border-radius:2px;background:#414244'></div>
<svg class='abs' style='left:1201.0px;top:869.0px' width='10' height='10' viewBox='0 0 10 10'><circle cx='5' cy='5' r='3.9' fill='#f58aa0'/><path d='M3.85 3.6 V6.4 M6.15 3.6 V6.4' stroke='#2e2e30' stroke-width='0.85'/></svg>
<div class='abs' style='left:1195px;top:871.7px;width:2px;height:3.6px;background:#b4b5ba;border-radius:0.5px'></div>
<div class='abs' style='left:1214px;top:872.0px;width:3px;height:3px;background:#c6c7cc;border-radius:50%'></div>
<div class='t' style='left:1206.0px;top:886.4px;font-size:3.2px;color:#f6f6f6;font-weight:700;transform:translateX(-50%)'>Wait5</div>
<div class='abs' style='left:1239px;top:864px;width:20px;height:20px;border:1px solid #85868a;border-radius:2px;background:#414244'></div>
<svg class='abs' style='left:1244.0px;top:869.0px' width='10' height='10' viewBox='0 0 10 10'><path d='M1.9 0.9 H6.2 L8.1 2.8 V9 H1.9 Z' fill='#22ad48'/><path d='M6.2 0.9 V2.8 H8.1 Z' fill='#6fd08a'/><rect x='3.6' y='5.2' width='2.8' height='2' rx='0.6' fill='#c9efd2'/></svg>
<div class='abs' style='left:1238px;top:871.7px;width:2px;height:3.6px;background:#b4b5ba;border-radius:0.5px'></div>
<div class='abs' style='left:1257px;top:872.0px;width:3px;height:3px;background:#c6c7cc;border-radius:50%'></div>
<div class='t' style='left:1249.0px;top:886.4px;font-size:3.2px;color:#f6f6f6;font-weight:700;transform:translateX(-50%)'>Sheet - SPC 005</div>
<div class='t' style='left:1249.0px;top:890.4px;font-size:2.8px;color:#9a9a9e;transform:translateX(-50%)'>append : sheet</div>
<svg class='abs' style='left:728px;top:479px' width='6' height='9' viewBox='0 0 6 9'><path d='M3.6 0.5 L1 4.8 H2.9 L2.2 8.5 L5 3.9 H3.1 Z' fill='#e8534a'/></svg>
<div class='abs' style='left:735px;top:474px;width:20px;height:20px;border:1px solid #2a7a4a;border-radius:6px 2px 2px 6px;background:#414244'></div>
<svg class='abs' style='left:740.0px;top:479.0px' width='10' height='10' viewBox='0 0 10 10'><circle cx='5' cy='5' r='4' fill='#2fc2a2'/><path d='M4.9 2.8 V5.3 L6.5 6.3' fill='none' stroke='#3a3a3c' stroke-width='0.9'/></svg>
<svg class='abs' style='left:749px;top:488px' width='5' height='5' viewBox='0 0 5 5'><path d='M0.8 2.6 L2 3.7 L4.2 1.2' fill='none' stroke='#2e9a58' stroke-width='0.8'/></svg>
<div class='abs' style='left:753px;top:482.0px;width:3px;height:3px;background:#c6c7cc;border-radius:50%'></div>
<div class='t' style='left:745.0px;top:496.4px;font-size:3.2px;color:#f6f6f6;font-weight:700;transform:translateX(-50%)'>Schedule Trigger</div>
<div class='abs' style='left:785px;top:474px;width:20px;height:20px;border:1px solid #2a7a4a;border-radius:2px;background:#414244'></div>
<svg class='abs' style='left:790.0px;top:479.0px' width='10' height='10' viewBox='0 0 10 10'><path d='M3.6 1.4 Q2.6 1.4 2.6 2.4 V4.2 Q2.6 5 1.6 5 Q2.6 5 2.6 5.8 V7.6 Q2.6 8.6 3.6 8.6' fill='none' stroke='#f29e22' stroke-width='1.1'/><path d='M6.4 1.4 Q7.4 1.4 7.4 2.4 V4.2 Q7.4 5 8.4 5 Q7.4 5 7.4 5.8 V7.6 Q7.4 8.6 6.4 8.6' fill='none' stroke='#f29e22' stroke-width='1.1'/></svg>
<svg class='abs' style='left:799px;top:488px' width='5' height='5' viewBox='0 0 5 5'><path d='M0.8 2.6 L2 3.7 L4.2 1.2' fill='none' stroke='#2e9a58' stroke-width='0.8'/></svg>
<div class='abs' style='left:784px;top:481.7px;width:2px;height:3.6px;background:#b4b5ba;border-radius:0.5px'></div>
<div class='abs' style='left:803px;top:482.0px;width:3px;height:3px;background:#c6c7cc;border-radius:50%'></div>
<div class='t' style='left:795.0px;top:496.4px;font-size:3.2px;color:#f6f6f6;font-weight:700;transform:translateX(-50%)'>Code</div>
<div class='abs' style='left:821px;top:474px;width:20px;height:20px;border:1px solid #2a7a4a;border-radius:2px;background:#414244'></div>
<svg class='abs' style='left:826.0px;top:479.0px' width='10' height='10' viewBox='0 0 10 10'><rect x='1.5' y='2.6' width='7' height='1.3' fill='#5aa7f5'/><rect x='1.5' y='5.2' width='7' height='1.3' fill='#5aa7f5'/><rect x='4.4' y='6.6' width='1.2' height='2' fill='#5aa7f5'/></svg>
<svg class='abs' style='left:835px;top:488px' width='5' height='5' viewBox='0 0 5 5'><path d='M0.8 2.6 L2 3.7 L4.2 1.2' fill='none' stroke='#2e9a58' stroke-width='0.8'/></svg>
<div class='abs' style='left:820px;top:481.7px;width:2px;height:3.6px;background:#b4b5ba;border-radius:0.5px'></div>
<div class='abs' style='left:839.3px;top:478.90000000000003px;width:3.4px;height:3.4px;background:#c6c7cc;border-radius:50%'></div>
<div class='abs' style='left:839.3px;top:485.7px;width:3.4px;height:3.4px;background:#c6c7cc;border-radius:50%'></div>
<div class='t' style='left:831.0px;top:496.4px;font-size:3.2px;color:#f6f6f6;font-weight:700;transform:translateX(-50%)'>Switch</div>
<div class='t' style='left:831.0px;top:500.4px;font-size:2.8px;color:#9a9a9e;transform:translateX(-50%)'>mode: Rules</div>
<div class='abs' style='left:875px;top:454px;width:20px;height:20px;border:1px solid #2a7a4a;border-radius:2px;background:#414244'></div>
<svg class='abs' style='left:880.0px;top:459.0px' width='10' height='10' viewBox='0 0 10 10'><path d='M1.9 0.9 H6.2 L8.1 2.8 V9 H1.9 Z' fill='#22ad48'/><path d='M6.2 0.9 V2.8 H8.1 Z' fill='#6fd08a'/><rect x='3.6' y='5.2' width='2.8' height='2' rx='0.6' fill='#c9efd2'/></svg>
<svg class='abs' style='left:889px;top:468px' width='5' height='5' viewBox='0 0 5 5'><path d='M0.8 2.6 L2 3.7 L4.2 1.2' fill='none' stroke='#2e9a58' stroke-width='0.8'/></svg>
<div class='abs' style='left:874px;top:461.7px;width:2px;height:3.6px;background:#b4b5ba;border-radius:0.5px'></div>
<div class='abs' style='left:893px;top:462.0px;width:3px;height:3px;background:#c6c7cc;border-radius:50%'></div>
<div class='t' style='left:885.0px;top:476.4px;font-size:3.2px;color:#f6f6f6;font-weight:700;transform:translateX(-50%)'>Data</div>
<div class='t' style='left:885.0px;top:480.4px;font-size:2.8px;color:#9a9a9e;transform:translateX(-50%)'>read: sheet</div>
<div class='abs' style='left:926px;top:454px;width:20px;height:20px;border:1px solid #2a7a4a;border-radius:2px;background:#414244'></div>
<svg class='abs' style='left:931.0px;top:459.0px' width='10' height='10' viewBox='0 0 10 10'><path d='M3.6 1.4 Q2.6 1.4 2.6 2.4 V4.2 Q2.6 5 1.6 5 Q2.6 5 2.6 5.8 V7.6 Q2.6 8.6 3.6 8.6' fill='none' stroke='#f29e22' stroke-width='1.1'/><path d='M6.4 1.4 Q7.4 1.4 7.4 2.4 V4.2 Q7.4 5 8.4 5 Q7.4 5 7.4 5.8 V7.6 Q7.4 8.6 6.4 8.6' fill='none' stroke='#f29e22' stroke-width='1.1'/></svg>
<svg class='abs' style='left:940px;top:468px' width='5' height='5' viewBox='0 0 5 5'><path d='M0.8 2.6 L2 3.7 L4.2 1.2' fill='none' stroke='#2e9a58' stroke-width='0.8'/></svg>
<div class='abs' style='left:925px;top:461.7px;width:2px;height:3.6px;background:#b4b5ba;border-radius:0.5px'></div>
<div class='abs' style='left:944px;top:462.0px;width:3px;height:3px;background:#c6c7cc;border-radius:50%'></div>
<div class='t' style='left:936.0px;top:476.4px;font-size:3.2px;color:#f6f6f6;font-weight:700;transform:translateX(-50%)'>Code</div>
<div class='abs' style='left:875px;top:493px;width:20px;height:20px;border:1px solid #85868a;border-radius:2px;background:#414244'></div>
<svg class='abs' style='left:880.0px;top:498.0px' width='10' height='10' viewBox='0 0 10 10'><path d='M1.9 0.9 H6.2 L8.1 2.8 V9 H1.9 Z' fill='#22ad48'/><path d='M6.2 0.9 V2.8 H8.1 Z' fill='#6fd08a'/><rect x='3.6' y='5.2' width='2.8' height='2' rx='0.6' fill='#c9efd2'/></svg>
<div class='abs' style='left:874px;top:500.7px;width:2px;height:3.6px;background:#b4b5ba;border-radius:0.5px'></div>
<div class='abs' style='left:893px;top:501.0px;width:3px;height:3px;background:#c6c7cc;border-radius:50%'></div>
<div class='t' style='left:885.0px;top:515.4px;font-size:3.2px;color:#f6f6f6;font-weight:700;transform:translateX(-50%)'>Data1</div>
<div class='t' style='left:885.0px;top:519.4px;font-size:2.8px;color:#9a9a9e;transform:translateX(-50%)'>read: sheet</div>
<div class='abs' style='left:926px;top:493px;width:20px;height:20px;border:1px solid #85868a;border-radius:2px;background:#414244'></div>
<svg class='abs' style='left:931.0px;top:498.0px' width='10' height='10' viewBox='0 0 10 10'><path d='M3.6 1.4 Q2.6 1.4 2.6 2.4 V4.2 Q2.6 5 1.6 5 Q2.6 5 2.6 5.8 V7.6 Q2.6 8.6 3.6 8.6' fill='none' stroke='#f29e22' stroke-width='1.1'/><path d='M6.4 1.4 Q7.4 1.4 7.4 2.4 V4.2 Q7.4 5 8.4 5 Q7.4 5 7.4 5.8 V7.6 Q7.4 8.6 6.4 8.6' fill='none' stroke='#f29e22' stroke-width='1.1'/></svg>
<div class='abs' style='left:925px;top:500.7px;width:2px;height:3.6px;background:#b4b5ba;border-radius:0.5px'></div>
<div class='abs' style='left:944px;top:501.0px;width:3px;height:3px;background:#c6c7cc;border-radius:50%'></div>
<div class='t' style='left:936.0px;top:515.4px;font-size:3.2px;color:#f6f6f6;font-weight:700;transform:translateX(-50%)'>Code1</div>
<div class='abs' style='left:922px;top:259px;width:20px;height:20px;border:1px solid #2a7a4a;border-radius:2px;background:#414244'></div>
<svg class='abs' style='left:927.0px;top:264.0px' width='10' height='10' viewBox='0 0 10 10'><rect x='1.5' y='3' width='7' height='1.2' fill='#2fbd6c'/><rect x='1.5' y='5.6' width='7' height='1.2' fill='#2fbd6c'/><rect x='4.4' y='1.6' width='1.2' height='7' fill='#2fbd6c'/></svg>
<svg class='abs' style='left:936px;top:273px' width='5' height='5' viewBox='0 0 5 5'><path d='M0.8 2.6 L2 3.7 L4.2 1.2' fill='none' stroke='#2e9a58' stroke-width='0.8'/></svg>
<div class='abs' style='left:921px;top:266.7px;width:2px;height:3.6px;background:#b4b5ba;border-radius:0.5px'></div>
<div class='abs' style='left:940.3px;top:263.90000000000003px;width:3.4px;height:3.4px;background:#c6c7cc;border-radius:50%'></div>
<div class='abs' style='left:940.3px;top:270.7px;width:3.4px;height:3.4px;background:#c6c7cc;border-radius:50%'></div>
<div class='t' style='left:932.0px;top:281.4px;font-size:3.2px;color:#f6f6f6;font-weight:700;transform:translateX(-50%)'>Loop Items</div>
<div class='abs' style='left:923px;top:696px;width:20px;height:20px;border:1px solid #85868a;border-radius:2px;background:#414244'></div>
<svg class='abs' style='left:928.0px;top:701.0px' width='10' height='10' viewBox='0 0 10 10'><rect x='1.5' y='3' width='7' height='1.2' fill='#2fbd6c'/><rect x='1.5' y='5.6' width='7' height='1.2' fill='#2fbd6c'/><rect x='4.4' y='1.6' width='1.2' height='7' fill='#2fbd6c'/></svg>
<div class='abs' style='left:922px;top:703.7px;width:2px;height:3.6px;background:#b4b5ba;border-radius:0.5px'></div>
<div class='abs' style='left:941.3px;top:700.9px;width:3.4px;height:3.4px;background:#c6c7cc;border-radius:50%'></div>
<div class='abs' style='left:941.3px;top:707.6999999999999px;width:3.4px;height:3.4px;background:#c6c7cc;border-radius:50%'></div>
<div class='t' style='left:933.0px;top:718.4px;font-size:3.2px;color:#f6f6f6;font-weight:700;transform:translateX(-50%)'>Loop Items1</div>
<div class='abs' style='left:1369px;top:41px;width:20px;height:20px;border:1px solid #2a7a4a;border-radius:2px;background:#414244'></div>
<svg class='abs' style='left:1374.0px;top:46.0px' width='10' height='10' viewBox='0 0 10 10'><path d='M1.9 0.9 H6.2 L8.1 2.8 V9 H1.9 Z' fill='#22ad48'/><path d='M6.2 0.9 V2.8 H8.1 Z' fill='#6fd08a'/><rect x='3.6' y='5.2' width='2.8' height='2' rx='0.6' fill='#c9efd2'/></svg>
<svg class='abs' style='left:1383px;top:55px' width='5' height='5' viewBox='0 0 5 5'><path d='M0.8 2.6 L2 3.7 L4.2 1.2' fill='none' stroke='#2e9a58' stroke-width='0.8'/></svg>
<div class='abs' style='left:1368px;top:48.7px;width:2px;height:3.6px;background:#b4b5ba;border-radius:0.5px'></div>
<div class='abs' style='left:1387px;top:49.0px;width:3px;height:3px;background:#c6c7cc;border-radius:50%'></div>
<div class='t' style='left:1379.0px;top:63.4px;font-size:3.2px;color:#f6f6f6;font-weight:700;transform:translateX(-50%)'>Sheet - Human thanh lý</div>
<div class='t' style='left:1379.0px;top:67.4px;font-size:2.8px;color:#9a9a9e;transform:translateX(-50%)'>append : sheet</div>
<div class='abs' style='left:1369px;top:96px;width:20px;height:20px;border:1px solid #85868a;border-radius:2px;background:#414244'></div>
<svg class='abs' style='left:1374.0px;top:101.0px' width='10' height='10' viewBox='0 0 10 10'><path d='M1.9 0.9 H6.2 L8.1 2.8 V9 H1.9 Z' fill='#22ad48'/><path d='M6.2 0.9 V2.8 H8.1 Z' fill='#6fd08a'/><rect x='3.6' y='5.2' width='2.8' height='2' rx='0.6' fill='#c9efd2'/></svg>
<div class='abs' style='left:1368px;top:103.7px;width:2px;height:3.6px;background:#b4b5ba;border-radius:0.5px'></div>
<div class='abs' style='left:1387px;top:104.0px;width:3px;height:3px;background:#c6c7cc;border-radius:50%'></div>
<div class='t' style='left:1379.0px;top:118.4px;font-size:3.2px;color:#f6f6f6;font-weight:700;transform:translateX(-50%)'>Sheet - SPC SILICONE</div>
<div class='t' style='left:1379.0px;top:122.4px;font-size:2.8px;color:#9a9a9e;transform:translateX(-50%)'>append : sheet</div>
<div class='abs' style='left:1369px;top:152px;width:20px;height:20px;border:1px solid #85868a;border-radius:2px;background:#414244'></div>
<svg class='abs' style='left:1374.0px;top:157.0px' width='10' height='10' viewBox='0 0 10 10'><path d='M1.9 0.9 H6.2 L8.1 2.8 V9 H1.9 Z' fill='#22ad48'/><path d='M6.2 0.9 V2.8 H8.1 Z' fill='#6fd08a'/><rect x='3.6' y='5.2' width='2.8' height='2' rx='0.6' fill='#c9efd2'/></svg>
<div class='abs' style='left:1368px;top:159.7px;width:2px;height:3.6px;background:#b4b5ba;border-radius:0.5px'></div>
<div class='abs' style='left:1387px;top:160.0px;width:3px;height:3px;background:#c6c7cc;border-radius:50%'></div>
<div class='t' style='left:1379.0px;top:174.4px;font-size:3.2px;color:#f6f6f6;font-weight:700;transform:translateX(-50%)'>Sheet - Vật Liệu Mới 01 Mới</div>
<div class='t' style='left:1379.0px;top:178.4px;font-size:2.8px;color:#9a9a9e;transform:translateX(-50%)'>append : sheet</div>
<div class='abs' style='left:1385px;top:247px;width:20px;height:20px;border:1px solid #85868a;border-radius:2px;background:#414244'></div>
<svg class='abs' style='left:1390.0px;top:252.0px' width='10' height='10' viewBox='0 0 10 10'><path d='M1.9 0.9 H6.2 L8.1 2.8 V9 H1.9 Z' fill='#22ad48'/><path d='M6.2 0.9 V2.8 H8.1 Z' fill='#6fd08a'/><rect x='3.6' y='5.2' width='2.8' height='2' rx='0.6' fill='#c9efd2'/></svg>
<div class='abs' style='left:1384px;top:254.7px;width:2px;height:3.6px;background:#b4b5ba;border-radius:0.5px'></div>
<div class='abs' style='left:1403px;top:255.0px;width:3px;height:3px;background:#c6c7cc;border-radius:50%'></div>
<div class='t' style='left:1395.0px;top:269.4px;font-size:3.2px;color:#f6f6f6;font-weight:700;transform:translateX(-50%)'>Sheet - SPC 2</div>
<div class='t' style='left:1395.0px;top:273.4px;font-size:2.8px;color:#9a9a9e;transform:translateX(-50%)'>append : sheet</div>
<div class='abs' style='left:1385px;top:310px;width:20px;height:20px;border:1px solid #85868a;border-radius:2px;background:#414244'></div>
<svg class='abs' style='left:1390.0px;top:315.0px' width='10' height='10' viewBox='0 0 10 10'><path d='M1.9 0.9 H6.2 L8.1 2.8 V9 H1.9 Z' fill='#22ad48'/><path d='M6.2 0.9 V2.8 H8.1 Z' fill='#6fd08a'/><rect x='3.6' y='5.2' width='2.8' height='2' rx='0.6' fill='#c9efd2'/></svg>
<div class='abs' style='left:1384px;top:317.7px;width:2px;height:3.6px;background:#b4b5ba;border-radius:0.5px'></div>
<div class='abs' style='left:1403px;top:318.0px;width:3px;height:3px;background:#c6c7cc;border-radius:50%'></div>
<div class='t' style='left:1395.0px;top:332.4px;font-size:3.2px;color:#f6f6f6;font-weight:700;transform:translateX(-50%)'>Sheet - SPC 4</div>
<div class='t' style='left:1395.0px;top:336.4px;font-size:2.8px;color:#9a9a9e;transform:translateX(-50%)'>append : sheet</div>
<div class='t' style='left:1020.0px;top:205.35000000000002px;font-size:3.2px;color:#f4f4ff;font-weight:700;transform:translateX(-50%)'>1 item</div>
<div class='t' style='left:1020.0px;top:219.05px;font-size:3.2px;color:#f4f4ff;font-weight:700;transform:translateX(-50%)'>1 item</div>
<div class='t' style='left:1020.0px;top:232.75px;font-size:3.2px;color:#f4f4ff;font-weight:700;transform:translateX(-50%)'>1 item</div>
<div class='t' style='left:1020.0px;top:246.45px;font-size:3.2px;color:#f4f4ff;font-weight:700;transform:translateX(-50%)'>1 item</div>
<div class='t' style='left:1020.0px;top:260.05px;font-size:3.2px;color:#f4f4ff;font-weight:700;transform:translateX(-50%)'>1 item</div>
<div class='t' style='left:1020.0px;top:299.20000000000005px;font-size:3.2px;color:#f4f4ff;font-weight:700;transform:translateX(-50%)'>1 item</div>
<div class='t' style='left:1020.0px;top:314.85px;font-size:3.2px;color:#f4f4ff;font-weight:700;transform:translateX(-50%)'>1 item</div>
<div class='t' style='left:1020.0px;top:330.35px;font-size:3.2px;color:#f4f4ff;font-weight:700;transform:translateX(-50%)'>1 item</div>
<div class='t' style='left:1020.0px;top:345.9px;font-size:3.2px;color:#f4f4ff;font-weight:700;transform:translateX(-50%)'>1 item</div>
<div class='t' style='left:1020.0px;top:359.5px;font-size:3.2px;color:#f4f4ff;font-weight:700;transform:translateX(-50%)'>1 item</div>
<div class='t' style='left:1133.25px;top:143.8px;font-size:3.2px;color:#f4f4ff;font-weight:700;transform:translateX(-50%)'>1 item</div>
<div class='t' style='left:1181.95px;top:143.8px;font-size:3.2px;color:#f4f4ff;font-weight:700;transform:translateX(-50%)'>1 item</div>
<div class='t' style='left:1222.85px;top:143.8px;font-size:3.2px;color:#f4f4ff;font-weight:700;transform:translateX(-50%)'>1 item</div>
<div class='t' style='left:1133.25px;top:171.20000000000002px;font-size:3.2px;color:#f4f4ff;font-weight:700;transform:translateX(-50%)'>1 item</div>
<div class='t' style='left:1181.95px;top:171.20000000000002px;font-size:3.2px;color:#f4f4ff;font-weight:700;transform:translateX(-50%)'>1 item</div>
<div class='t' style='left:1222.85px;top:171.20000000000002px;font-size:3.2px;color:#f4f4ff;font-weight:700;transform:translateX(-50%)'>1 item</div>
<div class='t' style='left:770.6px;top:479.7px;font-size:3.2px;color:#f4f4ff;font-weight:700;transform:translateX(-50%)'>1 item</div>
<div class='t' style='left:813.3px;top:479.7px;font-size:3.2px;color:#f4f4ff;font-weight:700;transform:translateX(-50%)'>2 items</div>
<div class='t' style='left:858.2px;top:470.6px;font-size:3.2px;color:#f4f4ff;font-weight:700;transform:translateX(-50%)'>1 item</div>
<div class='t' style='left:858.2px;top:493.4px;font-size:3.2px;color:#f4f4ff;font-weight:700;transform:translateX(-50%)'>1 item</div>
<div class='t' style='left:911.3px;top:460.7px;font-size:3.2px;color:#f4f4ff;font-weight:700;transform:translateX(-50%)'>77 items</div>
<div class='t' style='left:934.8px;top:488.9px;font-size:3.2px;color:#f4f4ff;font-weight:700;transform:translateX(-50%)'>1 item</div>
<div class='t' style='left:31px;top:33px;font-size:16.6px;color:#f0f0f0;-webkit-text-stroke:0.2px #f0f0f0'>Executions</div>
<div class='abs' style='left:31px;top:77px;width:14px;height:14px;background:#ff6d5a;border-radius:2px'><svg width='14' height='14' viewBox='0 0 14 14' style='position:absolute;left:0;top:0'><path d='M3.8 7.2 L6 9.4 L10.3 4.8' fill='none' stroke='#2b2b2b' stroke-width='1.4'/></svg></div>
<div class='t' style='left:55px;top:76px;font-size:14.85px;color:#d2d3d6'>Auto refresh</div>
<div class='abs' style='left:266px;top:68px;width:30px;height:30px;border:1px solid #d9d9dc;border-radius:3px'><svg width='30' height='30' viewBox='0 0 30 30' style='position:absolute;left:-1px;top:-1px'><path d='M8.4 8.6 H22.4 Q23.2 8.6 22.7 9.3 L18.2 14.8 V21.6 L13 18.8 V14.8 L8.1 9.3 Q7.6 8.6 8.4 8.6 Z' fill='#f0f0f4'/></svg></div>
<div class='abs' style='left:31px;top:113px;width:246px;height:63px;background:#525355'></div>
<div class='abs' style='left:31px;top:113px;width:4px;height:252px;background:#f0989c'></div>
<div class='abs' style='left:31px;top:365px;width:4px;height:554px;background:#8ce0b4'></div>
<div class='row' style='top:113.0px'><div class='date'>Jun 3, 07:00:33</div><div class='sub'><span class='err'>Error</span> in 40.271s</div><svg width='16' height='16' viewBox='0 0 16 16' style='position:absolute;left:207px;top:23px'><path d='M11.6 4.6 A5.3 5.3 0 1 0 11.8 11.3' fill='none' stroke='#f46c52' stroke-width='2.2'/><path d='M15.1 0.9 L15.1 7.1 L8.9 7.1 Z' fill='#f46c52'/></svg></div>
<div class='row' style='top:176.1px'><div class='date'>Jun 3, 07:00:27</div><div class='sub'><span class='err'>Error</span> in 42.432s</div><svg width='16' height='16' viewBox='0 0 16 16' style='position:absolute;left:207px;top:23px'><path d='M11.6 4.6 A5.3 5.3 0 1 0 11.8 11.3' fill='none' stroke='#f46c52' stroke-width='2.2'/><path d='M15.1 0.9 L15.1 7.1 L8.9 7.1 Z' fill='#f46c52'/></svg></div>
<div class='row' style='top:239.2px'><div class='date'>Jun 3, 03:59:12</div><div class='sub'><span class='err'>Error</span> in 39.89s</div><svg width='16' height='16' viewBox='0 0 16 16' style='position:absolute;left:207px;top:23px'><path d='M11.6 4.6 A5.3 5.3 0 1 0 11.8 11.3' fill='none' stroke='#f46c52' stroke-width='2.2'/><path d='M15.1 0.9 L15.1 7.1 L8.9 7.1 Z' fill='#f46c52'/></svg></div>
<div class='row' style='top:302.3px'><div class='date'>Jun 3, 03:44:55</div><div class='sub'><span class='err'>Error</span> in 41.285s</div><svg width='16' height='16' viewBox='0 0 16 16' style='position:absolute;left:207px;top:23px'><path d='M11.6 4.6 A5.3 5.3 0 1 0 11.8 11.3' fill='none' stroke='#f46c52' stroke-width='2.2'/><path d='M15.1 0.9 L15.1 7.1 L8.9 7.1 Z' fill='#f46c52'/></svg></div>
<div class='row' style='top:365.4px'><div class='date'>Jun 2, 07:00:45</div><div class='sub' style='font-size:12.7px'>Succeeded in 5:31m</div></div>
<div class='row' style='top:428.5px'><div class='date'>Jun 2, 07:00:14</div><div class='sub' style='font-size:12.7px'>Succeeded in 5:08m</div></div>
<div class='row' style='top:491.6px'><div class='date'>Jun 2, 03:59:12</div><div class='sub' style='font-size:12.7px'>Succeeded in 10:37m</div></div>
<div class='row' style='top:554.7px'><div class='date'>Jun 2, 03:44:55</div><div class='sub' style='font-size:12.7px'>Succeeded in 10:36m</div></div>
<div class='row' style='top:617.8px'><div class='date'>Jun 1, 07:00:45</div><div class='sub' style='font-size:12.7px'>Succeeded in 5:37m</div></div>
<div class='row' style='top:680.9px'><div class='date'>Jun 1, 07:00:14</div><div class='sub' style='font-size:12.7px'>Succeeded in 5:08m</div></div>
<div class='row' style='top:744.0px'><div class='date'>Jun 1, 03:59:12</div><div class='sub' style='font-size:12.7px'>Succeeded in 10:40m</div></div>
<div class='row' style='top:807.1px'><div class='date'>Jun 1, 03:44:55</div><div class='sub' style='font-size:12.7px'>Succeeded in 10:38m</div></div>
<div class='row' style='top:870.2px'><div class='date'>May 31, 07:00:20</div><div class='sub' style='font-size:12.7px'>Succeeded in 10:46m</div></div>
<div class='abs' style='left:301px;top:110px;width:15px;height:809px;background:#fbfbfb'></div>
<svg class='abs' style='left:301px;top:110px' width='15' height='20'><path d='M4 14.5 L7.5 8 L11 14.5 Z' fill='#8a8a8a' stroke='#8a8a8a' stroke-linejoin='round'/></svg>
<div class='abs' style='left:304px;top:133px;width:9px;height:516px;background:#8b8b8b;border-radius:4.5px'></div>
<div class='abs' style='left:-3px;top:463px;width:19px;height:19px;border-radius:50%;background:#2e2f30;border:1px solid #56575a'></div>
<svg class='abs' style='left:0;top:464px' width='14' height='18'><path d='M7.6 5.2 L3.6 9 L7.6 12.8' fill='none' stroke='#e4e4e8' stroke-width='1.6' stroke-linecap='round' stroke-linejoin='round'/></svg>
<div class='t' style='left:337px;top:30px;font-size:17.2px;color:#d8d8dc'>Jun 3, 07:00:33</div>
<div class='t' style='left:337px;top:52px;font-size:14.5px;color:#c8c9cc'><span style='color:#f45b62'>Error</span> in 40.271s | ID#1845</div>
<div class='abs' style='left:787px;top:-10px;width:152px;height:33px;background:#58595c;border-radius:6px'></div>
<div class='abs' style='left:849px;top:-10px;width:86px;height:29px;background:#2e2f30;border-radius:5px'></div>
<div class='t' style='left:803px;top:0px;font-size:12.6px;color:#c8c9cc'>Editor</div>
<div class='t' style='left:861px;top:0px;font-size:11.6px;font-weight:700;color:#f4f4f4'>Executions</div>
<div class='abs' style='left:1369px;top:799px;width:57px;height:120px;background:#ffffff'></div>
</body></html>
